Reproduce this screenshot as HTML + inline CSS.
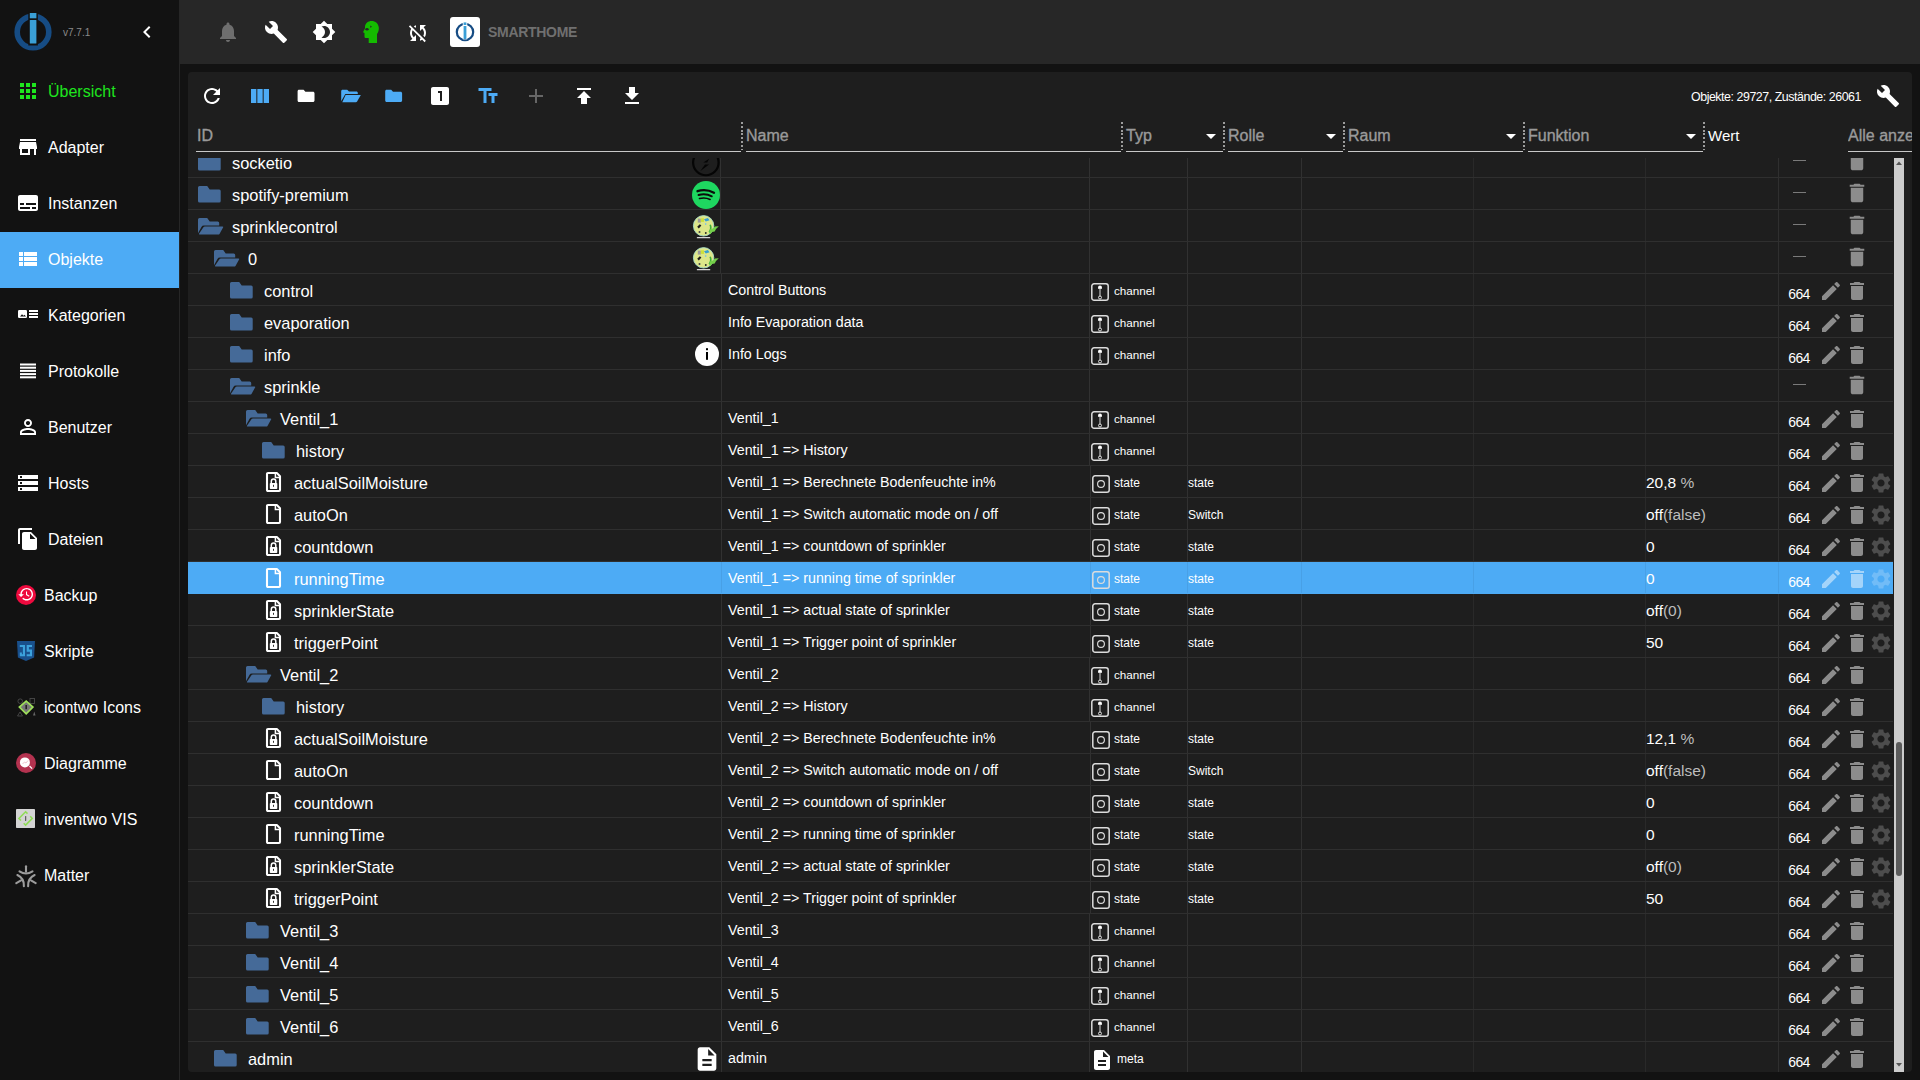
<!DOCTYPE html><html><head><meta charset="utf-8"><title>ioBroker Objekte</title><style>
html,body{margin:0;padding:0;}body{width:1920px;height:1080px;overflow:hidden;background:#121212;position:relative;font-family:"Liberation Sans", sans-serif;}
.t{position:absolute;white-space:nowrap;}.r{position:absolute;}.i{position:absolute;display:block;overflow:visible;}
#body{position:absolute;left:188px;top:158px;width:1706px;height:914px;overflow:hidden;}
</style></head><body>
<div class="r" style="left:0px;top:0px;width:179px;height:1080px;background:#121212;"></div>
<div class="r" style="left:179px;top:0px;width:1px;height:1080px;background:#262626;"></div>
<svg class="i" style="left:12px;top:11px;" width="42" height="42" viewBox="0 0 42 42"><circle cx="21" cy="21" r="15.8" fill="none" stroke="#164c84" stroke-width="5.6"/><rect x="16.3" y="0.5" width="9.6" height="34" fill="#121212"/><rect x="17.8" y="2" width="6.6" height="5.3" fill="#3a9fd6"/><rect x="17.8" y="8.9" width="6.6" height="23.7" rx="0.5" fill="#3a9fd6"/></svg>
<div class="t" style="left:63px;top:27.54px;font-size:10px;line-height:10px;color:#8a8a8a;font-weight:400;">v7.7.1</div>
<svg class="i" style="left:135px;top:20px;" width="24" height="24" viewBox="0 0 24 24"><path fill="#ffffff" d="M15.41 7.41L14 6l-6 6 6 6 1.41-1.41L10.83 12z"/></svg>
<div class="r" style="left:0px;top:232px;width:179px;height:56px;background:#4dabf5;"></div>
<div class="t" style="left:48px;top:84.46px;font-size:16px;line-height:16px;color:#1ee51e;font-weight:400;">Übersicht</div>
<svg class="i" style="left:16px;top:79px;" width="24" height="24" viewBox="0 0 24 24"><path fill="#1ee51e" d="M4 8h4V4H4v4zm6 12h4v-4h-4v4zm-6 0h4v-4H4v4zm0-6h4v-4H4v4zm6 0h4v-4h-4v4zm6-10v4h4V4h-4zm-6 4h4V4h-4v4zm6 6h4v-4h-4v4zm0 6h4v-4h-4v4z"/></svg>
<div class="t" style="left:48px;top:140.46px;font-size:16px;line-height:16px;color:#ffffff;font-weight:400;">Adapter</div>
<svg class="i" style="left:16px;top:135px;" width="24" height="24" viewBox="0 0 24 24"><path fill="#ffffff" d="M20 4H4v2h16V4zm1 10v-2l-1-5H4l-1 5v2h1v6h10v-6h4v6h2v-6h1zm-9 4H6v-4h6v4z"/></svg>
<div class="t" style="left:48px;top:196.46px;font-size:16px;line-height:16px;color:#ffffff;font-weight:400;">Instanzen</div>
<svg class="i" style="left:16px;top:191px;" width="24" height="24" viewBox="0 0 24 24"><path fill="#ffffff" d="M20 4H4c-1.1 0-2 .9-2 2v12c0 1.1.9 2 2 2h16c1.1 0 2-.9 2-2V6c0-1.1-.9-2-2-2zM4 12h4v2H4v-2zm10 6H4v-2h10v2zm6 0h-4v-2h4v2zm0-4H10v-2h10v2z"/></svg>
<div class="t" style="left:48px;top:252.46px;font-size:16px;line-height:16px;color:#ffffff;font-weight:400;">Objekte</div>
<svg class="i" style="left:16px;top:247px;" width="24" height="24" viewBox="0 0 24 24"><path fill="#ffffff" d="M3 14h4v-4H3v4zm0 5h4v-4H3v4zM3 9h4V5H3v4zm5 5h13v-4H8v4zm0 5h13v-4H8v4zM8 5v4h13V5H8z"/></svg>
<div class="t" style="left:48px;top:308.46px;font-size:16px;line-height:16px;color:#ffffff;font-weight:400;">Kategorien</div>
<div class="t" style="left:48px;top:364.46px;font-size:16px;line-height:16px;color:#ffffff;font-weight:400;">Protokolle</div>
<div class="t" style="left:48px;top:420.46px;font-size:16px;line-height:16px;color:#ffffff;font-weight:400;">Benutzer</div>
<svg class="i" style="left:16px;top:415px;" width="24" height="24" viewBox="0 0 24 24"><path fill="#ffffff" d="M12 5.9c1.16 0 2.1.94 2.1 2.1s-.94 2.1-2.1 2.1S9.9 9.16 9.9 8s.94-2.1 2.1-2.1m0 9c2.970 0 6.1 1.46 6.1 2.1v1.1H5.9V17c0-.64 3.13-2.1 6.1-2.1M12 4C9.79 4 8 5.79 8 8s1.79 4 4 4 4-1.79 4-4-1.79-4-4-4zm0 9c-2.67 0-8 1.34-8 4v3h16v-3c0-2.66-5.33-4-8-4z"/></svg>
<div class="t" style="left:48px;top:476.46px;font-size:16px;line-height:16px;color:#ffffff;font-weight:400;">Hosts</div>
<svg class="i" style="left:16px;top:471px;" width="24" height="24" viewBox="0 0 24 24"><path fill="#ffffff" d="M2 20h20v-4H2v4zm2-3h2v2H4v-2zM2 4v4h20V4H2zm4 3H4V5h2v2zm-4 7h20v-4H2v4zm2-3h2v2H4v-2z"/></svg>
<div class="t" style="left:48px;top:532.46px;font-size:16px;line-height:16px;color:#ffffff;font-weight:400;">Dateien</div>
<svg class="i" style="left:16px;top:527px;" width="24" height="24" viewBox="0 0 24 24"><path fill="#ffffff" d="M16 1H4c-1.1 0-2 .9-2 2v14h2V3h12V1zm-1 4l6 6v10c0 1.1-.9 2-2 2H7.99C6.89 23 6 22.1 6 21l.01-14c0-1.1.89-2 1.99-2h7zm-1 7h5.5L14 6.5V12z"/></svg>
<div class="t" style="left:44px;top:588.46px;font-size:16px;line-height:16px;color:#ffffff;font-weight:400;">Backup</div>
<div class="t" style="left:44px;top:644.46px;font-size:16px;line-height:16px;color:#ffffff;font-weight:400;">Skripte</div>
<div class="t" style="left:44px;top:700.46px;font-size:16px;line-height:16px;color:#ffffff;font-weight:400;">icontwo Icons</div>
<div class="t" style="left:44px;top:756.46px;font-size:16px;line-height:16px;color:#ffffff;font-weight:400;">Diagramme</div>
<div class="t" style="left:44px;top:812.46px;font-size:16px;line-height:16px;color:#ffffff;font-weight:400;">inventwo VIS</div>
<div class="t" style="left:44px;top:868.46px;font-size:16px;line-height:16px;color:#ffffff;font-weight:400;">Matter</div>
<svg class="i" style="left:16px;top:303px;" width="24" height="24" viewBox="0 0 24 24"><rect x="2" y="7" width="9" height="8" rx="1.2" fill="#fff"/><path d="M4 13.5l2-2.2 1.5 1.5 1-1 1.5 1.7z" fill="#121212"/><rect x="13" y="7" width="9" height="2" fill="#fff"/><rect x="13" y="10" width="9" height="2" fill="#fff"/><rect x="13" y="13" width="9" height="2" fill="#fff"/></svg>
<svg class="i" style="left:16px;top:359px;" width="24" height="24" viewBox="0 0 24 24"><rect x="4" y="4.5" width="16" height="2" fill="#fff"/><rect x="4" y="7.7" width="16" height="2" fill="#fff"/><rect x="4" y="10.9" width="16" height="2" fill="#fff"/><rect x="4" y="14.1" width="16" height="2" fill="#fff"/><rect x="4" y="17.3" width="16" height="2" fill="#fff"/></svg>
<svg class="i" style="left:16px;top:585px;" width="20" height="20" viewBox="0 0 20 20"><circle cx="10" cy="10" r="10" fill="#ee0a3e"/><g transform="translate(1.6,0.8) scale(0.7)"><path fill="#fff" d="M13 3c-4.97 0-9 4.030-9 9H1l3.89 3.89.07.14L9 12H6c0-3.87 3.13-7 7-7s7 3.13 7 7-3.13 7-7 7c-1.93 0-3.68-.79-4.94-2.060l-1.42 1.42C8.27 19.99 10.51 21 13 21c4.97 0 9-4.03 9-9s-4.03-9-9-9zm-1 5v5l4.28 2.54.72-1.21-3.5-2.08V8H12z"/></g></svg>
<svg class="i" style="left:16px;top:640px;" width="20" height="22" viewBox="0 0 20 22"><path d="M1 1H19L18.1 17.6L10 21L1.9 17.6Z" fill="#19508c"/><path d="M3.8 4.9H9V16.3H3.8V12.5H5.9V14.2H6.9V7H3.8Z" fill="#3ca2dc"/><path d="M10.7 4.9H16V7H12.9V9.6H16V16.3H10.7V14.2H13.9V11.7H10.7Z" fill="#3ca2dc"/></svg>
<svg class="i" style="left:16px;top:697px;" width="20" height="20" viewBox="0 0 20 20"><g fill="none" stroke="#4a4a4a" stroke-width="0.9"><circle cx="4.2" cy="4.2" r="2.3"/><rect x="14" y="1.5" width="4.5" height="5"/><path d="M1.5 19h5l-2.5-4z"/></g><path d="M17 18.5h2.5l-1.2-4z" fill="#666"/><path d="M10.2 4.2L16.9 10 10.2 16.8 3.4 10z" fill="#777" stroke="#9ee05a" stroke-width="1.7"/><rect x="9.4" y="8" width="1.6" height="4.2" fill="#222"/></svg>
<svg class="i" style="left:16px;top:753px;" width="20" height="20" viewBox="0 0 20 20"><circle cx="10" cy="10" r="10" fill="#b3324f"/><circle cx="8.9" cy="9.4" r="5" fill="#fff"/><path d="M13.5 13l2.6 2.6" stroke="#fff" stroke-width="1.3"/><path d="M6.5 11l2-2 1.5 1 2-2.5" stroke="#e9b7c3" stroke-width="0.8" fill="none"/></svg>
<svg class="i" style="left:16px;top:809px;" width="19" height="19" viewBox="0 0 19 19"><rect x="0" y="0" width="19" height="19" rx="0.8" fill="#d4d4d4"/><path d="M11.5 4.6L9.6 2.7 2.9 9.4 5 11.5M7.7 14.2L9.6 16.1 16.3 9.4 14.2 7.3" fill="none" stroke="#8fdc55" stroke-width="1.5"/><rect x="9.2" y="7" width="1" height="5" rx="0.5" fill="#444"/></svg>
<svg class="i" style="left:16px;top:865px;" width="20" height="22" viewBox="0 0 20 22"><g transform="rotate(0 10 12.5)" stroke="#9c9c9c" stroke-width="2.1" fill="none" stroke-linecap="round"><path d="M10 1.3V6.8"/><path d="M3.5 6.3Q10 10.7 16.5 6.3"/></g><g transform="rotate(120 10 12.5)" stroke="#9c9c9c" stroke-width="2.1" fill="none" stroke-linecap="round"><path d="M10 1.3V6.8"/><path d="M3.5 6.3Q10 10.7 16.5 6.3"/></g><g transform="rotate(240 10 12.5)" stroke="#9c9c9c" stroke-width="2.1" fill="none" stroke-linecap="round"><path d="M10 1.3V6.8"/><path d="M3.5 6.3Q10 10.7 16.5 6.3"/></g></svg>
<div class="r" style="left:180px;top:0px;width:1740px;height:64px;background:#272727;"></div>
<svg class="i" style="left:216px;top:20px;" width="24" height="24" viewBox="0 0 24 24"><path fill="#6e6e6e" d="M12 22c1.1 0 2-.9 2-2h-4c0 1.1.89 2 2 2zm6-6v-5c0-3.07-1.64-5.64-4.5-6.32V4c0-.83-.67-1.5-1.5-1.5s-1.5.67-1.5 1.5v.68C7.63 5.36 6 7.92 6 11v5l-2 2v1h16v-1l-2-2z"/></svg>
<svg class="i" style="left:264px;top:20px;" width="24" height="24" viewBox="0 0 24 24"><path fill="#ffffff" d="M22.7 19l-9.1-9.1c.9-2.3.4-5-1.5-6.9-2-2-5-2.4-7.4-1.3L9 6 6 9 1.6 4.7C.4 7.1.9 10.1 2.9 12.1c1.9 1.9 4.6 2.4 6.9 1.5l9.1 9.1c.4.4 1 .4 1.4 0l2.3-2.3c.5-.4.5-1.1.1-1.4z"/></svg>
<svg class="i" style="left:312px;top:20px;" width="24" height="24" viewBox="0 0 24 24"><path fill="#ffffff" d="M20 8.69V4h-4.69L12 .69 8.69 4H4v4.69L.69 12 4 15.31V20h4.69L12 23.31 15.31 20H20v-4.69L23.31 12 20 8.69zM12 18c-.89 0-1.74-.2-2.5-.55C11.56 16.5 13 14.42 13 12s-1.44-4.5-3.5-5.45C10.26 6.2 11.11 6 12 6c3.31 0 6 2.69 6 6s-2.69 6-6 6z"/></svg>
<svg class="i" style="left:356px;top:16px;" width="30" height="32" viewBox="0 0 30 32"><path d="M12.7 27H21V18C22.5 16 23 13.5 22.8 11.5C22.5 7.5 19.5 4.9 15.5 4.9C12 4.9 9.5 7 9 10.5V12.3L7 16.2L8.5 16.9V20.5C8.5 21.5 9.2 22 10 22H12.7Z" fill="#14bb00"/><ellipse cx="11" cy="13.3" rx="1.7" ry="1.3" fill="#272727"/><path d="M14.2 9.5L15.9 10.6L14.5 12Z" fill="#272727"/></svg>
<svg class="i" style="left:406px;top:21px;" width="24" height="24" viewBox="0 0 24 24"><path fill="#ffffff" d="M10 6.35V4.26c-.8.21-1.55.54-2.23.96l1.46 1.46c.25-.12.5-.24.77-.33zm-7.14-.94l2.36 2.36C4.45 8.99 4 10.44 4 12c0 2.21.91 4.2 2.36 5.64L4 20h6v-6l-2.24 2.24C6.68 15.15 6 13.66 6 12c0-1 .25-1.94.68-2.77l8.08 8.08c-.25.13-.5.25-.77.34v2.09c.8-.21 1.550-.54 2.23-.96l2.36 2.36 1.27-1.27L4.14 4.14 2.86 5.41zM20 4h-6v6l2.24-2.24C17.32 8.85 18 10.34 18 12c0 1-.25 1.94-.68 2.77l1.46 1.46C19.550 15.010 20 13.56 20 12c0-2.21-.91-4.2-2.36-5.64L20 4z"/></svg>
<div class="r" style="left:450px;top:17px;width:30px;height:30px;background:#ffffff;border-radius:3px;"></div>
<svg class="i" style="left:455px;top:21px;" width="20" height="21" viewBox="0 0 20 21"><circle cx="10" cy="11" r="8.2" fill="none" stroke="#164c84" stroke-width="2.2"/><rect x="7.8" y="0.6" width="4.4" height="17.8" fill="#fff"/><rect x="8.6" y="1.4" width="2.8" height="2.6" fill="#3a9fd6"/><rect x="8.6" y="5" width="2.8" height="13" fill="#3a9fd6"/></svg>
<div class="t" style="left:488px;top:24.55px;font-size:14px;line-height:14px;color:#707070;font-weight:700;letter-spacing:-0.3px;">SMARTHOME</div>
<div class="r" style="left:188px;top:72px;width:1724px;height:1000px;background:#1e1e1e;border-radius:4px;"></div>
<svg class="i" style="left:200px;top:84px;" width="24" height="24" viewBox="0 0 24 24"><path fill="#ffffff" d="M17.65 6.35C16.2 4.9 14.21 4 12 4c-4.42 0-7.99 3.58-7.99 8s3.57 8 7.99 8c3.73 0 6.84-2.55 7.73-6h-2.08c-.82 2.33-3.04 4-5.65 4-3.31 0-6-2.69-6-6s2.69-6 6-6c1.66 0 3.14.69 4.220 1.78L13 11h7V4l-2.35 2.35z"/></svg>
<svg class="i" style="left:248px;top:84px;" width="24" height="24" viewBox="0 0 24 24"><path fill="#4dabf5" d="M14.67 5v14H9.33V5h5.34zm1 14H21V5h-5.33v14zm-7.34 0V5H3v14h5.33z"/></svg>
<svg class="i" style="left:296px;top:86px;" width="20" height="20" viewBox="0 0 20 20"><path d="M1.6 5.3c0-.9.6-1.5 1.4-1.5h4.6l1.8 1.9h7.6c.8 0 1.5.6 1.5 1.5v7.4c0 .9-.7 1.5-1.5 1.5H3c-.8 0-1.4-.6-1.4-1.5z" fill="#ffffff"/></svg>
<svg class="i" style="left:340px;top:86px;" width="22" height="20" viewBox="0 0 22 20"><path d="M1.2 5.2c0-.8.6-1.4 1.4-1.4h4.6l1.8 1.8h7.400c.8 0 1.400.600 1.400 1.400V8H5.300L1.200 15.200z" fill="#4dabf5"/><path d="M5.6 9h15.200l-3.700 6.500c-.300.500-.700.700-1.200.700H2.300z" fill="#4dabf5"/></svg>
<svg class="i" style="left:384px;top:86px;" width="20" height="20" viewBox="0 0 20 20"><path d="M1.2 5.3c0-.9.6-1.5 1.4-1.5h4.6l1.8 1.9h7.6c.8 0 1.5.6 1.5 1.5v7.4c0 .9-.7 1.5-1.5 1.5H2.6c-.8 0-1.4-.6-1.4-1.5z" fill="#4dabf5"/></svg>
<svg class="i" style="left:428px;top:84px;" width="24" height="24" viewBox="0 0 24 24"><path fill="#ffffff" d="M19 3H5c-1.1 0-2 .9-2 2v14c0 1.1.9 2 2 2h14c1.1 0 2-.9 2-2V5c0-1.1-.9-2-2-2zm-5 14h-2V9h-2V7h4v10z"/></svg>
<svg class="i" style="left:476px;top:84px;" width="24" height="24" viewBox="0 0 24 24"><path fill="#4dabf5" d="M2.5 4v3h5v12h3V7h5V4h-13zm19 5h-9v3h3v7h3v-7h3V9z"/></svg>
<svg class="i" style="left:524px;top:84px;" width="24" height="24" viewBox="0 0 24 24"><path fill="#666666" d="M19 13h-6v6h-2v-6H5v-2h6V5h2v6h6v2z"/></svg>
<svg class="i" style="left:572px;top:84px;" width="24" height="24" viewBox="0 0 24 24"><path fill="#ffffff" d="M5 4v2h14V4H5zm0 10h4v6h6v-6h4l-7-7-7 7z"/></svg>
<svg class="i" style="left:620px;top:84px;" width="24" height="24" viewBox="0 0 24 24"><path fill="#ffffff" d="M19 9h-4V3H9v6H5l7 7 7-7zM5 18v2h14v-2H5z"/></svg>
<div class="t" style="left:1691px;top:90.50px;font-size:12.4px;line-height:12.4px;color:#ffffff;font-weight:400;letter-spacing:-0.45px;">Objekte: 29727, Zustände: 26061</div>
<svg class="i" style="left:1876px;top:84px;" width="24" height="24" viewBox="0 0 24 24"><path fill="#ffffff" d="M22.7 19l-9.1-9.1c.9-2.3.4-5-1.5-6.9-2-2-5-2.4-7.4-1.3L9 6 6 9 1.6 4.7C.4 7.1.9 10.1 2.9 12.1c1.9 1.9 4.6 2.4 6.9 1.5l9.1 9.1c.4.4 1 .4 1.4 0l2.3-2.3c.5-.4.5-1.1.1-1.4z"/></svg>
<div class="r" style="left:196px;top:151px;width:545px;height:1px;background:#c8c8c8;"></div>
<div class="t" style="left:197px;top:128.46px;font-size:16px;line-height:16px;color:#9a9a9a;font-weight:400;-webkit-text-stroke:0.35px #9a9a9a;">ID</div>
<div class="r" style="left:741px;top:122px;width:2px;height:28px;background:repeating-linear-gradient(to bottom,#9c9c9c 0 2px,transparent 2px 3.8px);"></div>
<div class="r" style="left:746px;top:151px;width:375px;height:1px;background:#c8c8c8;"></div>
<div class="t" style="left:746px;top:128.46px;font-size:16px;line-height:16px;color:#9a9a9a;font-weight:400;-webkit-text-stroke:0.35px #9a9a9a;">Name</div>
<div class="r" style="left:1121px;top:122px;width:2px;height:28px;background:repeating-linear-gradient(to bottom,#9c9c9c 0 2px,transparent 2px 3.8px);"></div>
<div class="r" style="left:1126px;top:151px;width:97px;height:1px;background:#c8c8c8;"></div>
<div class="t" style="left:1126px;top:128.46px;font-size:16px;line-height:16px;color:#9a9a9a;font-weight:400;-webkit-text-stroke:0.35px #9a9a9a;">Typ</div>
<svg class="i" style="left:1199px;top:124px;" width="24" height="24" viewBox="0 0 24 24"><path fill="#ffffff" d="M7 10l5 5 5-5z"/></svg>
<div class="r" style="left:1223px;top:122px;width:2px;height:28px;background:repeating-linear-gradient(to bottom,#9c9c9c 0 2px,transparent 2px 3.8px);"></div>
<div class="r" style="left:1228px;top:151px;width:115px;height:1px;background:#c8c8c8;"></div>
<div class="t" style="left:1228px;top:128.46px;font-size:16px;line-height:16px;color:#9a9a9a;font-weight:400;-webkit-text-stroke:0.35px #9a9a9a;">Rolle</div>
<svg class="i" style="left:1319px;top:124px;" width="24" height="24" viewBox="0 0 24 24"><path fill="#ffffff" d="M7 10l5 5 5-5z"/></svg>
<div class="r" style="left:1343px;top:122px;width:2px;height:28px;background:repeating-linear-gradient(to bottom,#9c9c9c 0 2px,transparent 2px 3.8px);"></div>
<div class="r" style="left:1348px;top:151px;width:175px;height:1px;background:#c8c8c8;"></div>
<div class="t" style="left:1348px;top:128.46px;font-size:16px;line-height:16px;color:#9a9a9a;font-weight:400;-webkit-text-stroke:0.35px #9a9a9a;">Raum</div>
<svg class="i" style="left:1499px;top:124px;" width="24" height="24" viewBox="0 0 24 24"><path fill="#ffffff" d="M7 10l5 5 5-5z"/></svg>
<div class="r" style="left:1523px;top:122px;width:2px;height:28px;background:repeating-linear-gradient(to bottom,#9c9c9c 0 2px,transparent 2px 3.8px);"></div>
<div class="r" style="left:1528px;top:151px;width:175px;height:1px;background:#c8c8c8;"></div>
<div class="t" style="left:1528px;top:128.46px;font-size:16px;line-height:16px;color:#9a9a9a;font-weight:400;-webkit-text-stroke:0.35px #9a9a9a;">Funktion</div>
<svg class="i" style="left:1679px;top:124px;" width="24" height="24" viewBox="0 0 24 24"><path fill="#ffffff" d="M7 10l5 5 5-5z"/></svg>
<div class="r" style="left:1703px;top:122px;width:2px;height:28px;background:repeating-linear-gradient(to bottom,#9c9c9c 0 2px,transparent 2px 3.8px);"></div>
<div class="t" style="left:1708px;top:128.30px;font-size:15px;line-height:15px;color:#ffffff;font-weight:400;">Wert</div>
<div class="r" style="left:1848px;top:151px;width:64px;height:1px;background:#c8c8c8;"></div>
<div class="r" style="left:1848px;top:120px;width:64px;height:30px;overflow:hidden;">
<div class="t" style="left:0px;top:8.46px;font-size:16px;line-height:16px;color:#9a9a9a;font-weight:400;-webkit-text-stroke:0.35px #9a9a9a;">Alle anzeigen</div>
</div>
<div id="body">
<div class="r" style="left:0px;top:19px;width:1705px;height:1px;background:#2f2f2f;"></div>
<div class="r" style="left:532px;top:-12px;width:1px;height:31px;background:#313131;"></div>
<div class="r" style="left:901px;top:-12px;width:1px;height:31px;background:#313131;"></div>
<div class="r" style="left:999px;top:-12px;width:1px;height:31px;background:#313131;"></div>
<div class="r" style="left:1113px;top:-12px;width:1px;height:31px;background:#313131;"></div>
<div class="r" style="left:1285px;top:-12px;width:1px;height:31px;background:#292929;"></div>
<div class="r" style="left:1457px;top:-12px;width:1px;height:31px;background:#292929;"></div>
<div class="r" style="left:1590px;top:-12px;width:1px;height:31px;background:#2f2f2f;"></div>
<svg class="i" style="left:10.30px;top:-4.40px;" width="23" height="17" viewBox="0 0 23 17"><path d="M1.5 0H9.2L11.7 3.4H21.2Q22.7 3.4 22.7 4.9V15.1Q22.7 16.6 21.2 16.6H1.5Q0 16.6 0 15.1V1.5Q0 0 1.5 0Z" fill="#456a98"/></svg>
<div class="t" style="left:44.00px;top:-2.88px;font-size:16.4px;line-height:16.4px;color:#ffffff;font-weight:400;">socketio</div>
<svg class="i" style="left:504.00px;top:-10.00px;" width="28" height="28" viewBox="0 0 28 28"><circle cx="13.85" cy="14.5" r="12.75" fill="none" stroke="#050505" stroke-width="2.2"/><path d="M17.1 10.7L11.3 14.4H15.2Z" fill="#050505"/><path d="M13 16.6H17.1L8.4 23.1Z" fill="#050505"/></svg>
<div class="r" style="left:1605px;top:2px;width:13px;height:1px;background:#7a7a7a;"></div>
<svg class="i" style="left:1657.00px;top:-8.90px;transform-origin:12px 12px;transform:scale(1.04);" width="24" height="24" viewBox="0 0 24 24"><path fill="#8c8c8c" d="M6 19c0 1.1.9 2 2 2h8c1.1 0 2-.9 2-2V7H6v12zM19 4h-3.5l-1-1h-5l-1 1H5v2h14V4z"/></svg>
<div class="r" style="left:0px;top:51px;width:1705px;height:1px;background:#2f2f2f;"></div>
<div class="r" style="left:532px;top:20px;width:1px;height:31px;background:#313131;"></div>
<div class="r" style="left:901px;top:20px;width:1px;height:31px;background:#313131;"></div>
<div class="r" style="left:999px;top:20px;width:1px;height:31px;background:#313131;"></div>
<div class="r" style="left:1113px;top:20px;width:1px;height:31px;background:#313131;"></div>
<div class="r" style="left:1285px;top:20px;width:1px;height:31px;background:#292929;"></div>
<div class="r" style="left:1457px;top:20px;width:1px;height:31px;background:#292929;"></div>
<div class="r" style="left:1590px;top:20px;width:1px;height:31px;background:#2f2f2f;"></div>
<svg class="i" style="left:10.30px;top:27.60px;" width="23" height="17" viewBox="0 0 23 17"><path d="M1.5 0H9.2L11.7 3.4H21.2Q22.7 3.4 22.7 4.9V15.1Q22.7 16.6 21.2 16.6H1.5Q0 16.6 0 15.1V1.5Q0 0 1.5 0Z" fill="#456a98"/></svg>
<div class="t" style="left:44.00px;top:29.12px;font-size:16.4px;line-height:16.4px;color:#ffffff;font-weight:400;">spotify-premium</div>
<svg class="i" style="left:504.00px;top:23.00px;" width="28" height="28" viewBox="0 0 28 28"><circle cx="14" cy="14" r="14" fill="#1ed760"/><path d="M5.5 10.200c5.200-1.600 11.500-1.100 16.500 1.600" stroke="#0b0b0b" stroke-width="2.300" fill="none" stroke-linecap="round"/><path d="M6.500 14c4.300-1.200 9.400-.800 13.300 1.300" stroke="#0b0b0b" stroke-width="1.900" fill="none" stroke-linecap="round"/><path d="M7.500 17.500c3.500-.900 7.500-.600 10.600 1" stroke="#0b0b0b" stroke-width="1.600" fill="none" stroke-linecap="round"/></svg>
<div class="r" style="left:1605px;top:34px;width:13px;height:1px;background:#7a7a7a;"></div>
<svg class="i" style="left:1657.00px;top:23.10px;transform-origin:12px 12px;transform:scale(1.04);" width="24" height="24" viewBox="0 0 24 24"><path fill="#8c8c8c" d="M6 19c0 1.1.9 2 2 2h8c1.1 0 2-.9 2-2V7H6v12zM19 4h-3.5l-1-1h-5l-1 1H5v2h14V4z"/></svg>
<div class="r" style="left:0px;top:83px;width:1705px;height:1px;background:#2f2f2f;"></div>
<div class="r" style="left:532px;top:52px;width:1px;height:31px;background:#313131;"></div>
<div class="r" style="left:901px;top:52px;width:1px;height:31px;background:#313131;"></div>
<div class="r" style="left:999px;top:52px;width:1px;height:31px;background:#313131;"></div>
<div class="r" style="left:1113px;top:52px;width:1px;height:31px;background:#313131;"></div>
<div class="r" style="left:1285px;top:52px;width:1px;height:31px;background:#292929;"></div>
<div class="r" style="left:1457px;top:52px;width:1px;height:31px;background:#292929;"></div>
<div class="r" style="left:1590px;top:52px;width:1px;height:31px;background:#2f2f2f;"></div>
<svg class="i" style="left:10.30px;top:59.60px;" width="26" height="17" viewBox="0 0 26 17"><path d="M1.5 0H9.2L11.7 3.4H19.7Q21.2 3.4 21.2 4.9V7.5H5.8Q4.3 7.5 3.6 8.7L0 15.3V1.5Q0 0 1.5 0Z" fill="#456a98"/><path d="M5.4 9.2Q5.9 8.4 6.9 8.4H24.4Q25.6 8.4 25.2 9.3L21.5 15.9Q21.1 16.6 20.3 16.6H1.5Q0.6 16.6 1 15.8Z" fill="#456a98"/></svg>
<div class="t" style="left:44.00px;top:61.12px;font-size:16.4px;line-height:16.4px;color:#ffffff;font-weight:400;">sprinklecontrol</div>
<svg class="i" style="left:505.00px;top:56.00px;" width="28" height="26" viewBox="0 0 28 26"><circle cx="10.6" cy="11.8" r="10.2" fill="#dde78a" stroke="#a6dccb" stroke-width="0.9"/><rect x="4.8" y="4.6" width="3" height="4" fill="#9a9a9a"/><rect x="7.8" y="4.3" width="3.2" height="3.6" fill="#cfe03a"/><path d="M11 5.2l3.8-1.2 1.8 2.2-3.8 1.3z" fill="#3aa0d0"/><path d="M4.2 12.8l2.6-2.6 1.6 1.4-2.6 3z" fill="#1e1e1e"/><circle cx="6.5" cy="18" r="1" fill="#444"/><circle cx="12.8" cy="19" r="0.9" fill="#222"/><rect x="12" y="9" width="1.3" height="2" fill="#8cc8d8"/><path d="M17.2 10.8c1 2.5.8 5-1 7.5" stroke="#3db03a" stroke-width="1.6" fill="none"/><path d="M17 15.6l3.3-1.4 1.5-1.8 4-0.2-2.8 2.8-1.3 2.6-2.8.4-1.4 2.2-1.3-1.5z" fill="#74d04a"/><rect x="3.8" y="23" width="13.5" height="1.3" rx="0.6" fill="#d6d6d6"/></svg>
<div class="r" style="left:1605px;top:66px;width:13px;height:1px;background:#7a7a7a;"></div>
<svg class="i" style="left:1657.00px;top:55.10px;transform-origin:12px 12px;transform:scale(1.04);" width="24" height="24" viewBox="0 0 24 24"><path fill="#8c8c8c" d="M6 19c0 1.1.9 2 2 2h8c1.1 0 2-.9 2-2V7H6v12zM19 4h-3.5l-1-1h-5l-1 1H5v2h14V4z"/></svg>
<div class="r" style="left:0px;top:115px;width:1705px;height:1px;background:#2f2f2f;"></div>
<div class="r" style="left:532px;top:84px;width:1px;height:31px;background:#313131;"></div>
<div class="r" style="left:901px;top:84px;width:1px;height:31px;background:#313131;"></div>
<div class="r" style="left:999px;top:84px;width:1px;height:31px;background:#313131;"></div>
<div class="r" style="left:1113px;top:84px;width:1px;height:31px;background:#313131;"></div>
<div class="r" style="left:1285px;top:84px;width:1px;height:31px;background:#292929;"></div>
<div class="r" style="left:1457px;top:84px;width:1px;height:31px;background:#292929;"></div>
<div class="r" style="left:1590px;top:84px;width:1px;height:31px;background:#2f2f2f;"></div>
<svg class="i" style="left:26.30px;top:91.60px;" width="26" height="17" viewBox="0 0 26 17"><path d="M1.5 0H9.2L11.7 3.4H19.7Q21.2 3.4 21.2 4.9V7.5H5.8Q4.3 7.5 3.6 8.7L0 15.3V1.5Q0 0 1.5 0Z" fill="#456a98"/><path d="M5.4 9.2Q5.9 8.4 6.9 8.4H24.4Q25.6 8.4 25.2 9.3L21.5 15.9Q21.1 16.6 20.3 16.6H1.5Q0.6 16.6 1 15.8Z" fill="#456a98"/></svg>
<div class="t" style="left:60.00px;top:93.12px;font-size:16.4px;line-height:16.4px;color:#ffffff;font-weight:400;">0</div>
<svg class="i" style="left:505.00px;top:88.00px;" width="28" height="26" viewBox="0 0 28 26"><circle cx="10.6" cy="11.8" r="10.2" fill="#dde78a" stroke="#a6dccb" stroke-width="0.9"/><rect x="4.8" y="4.6" width="3" height="4" fill="#9a9a9a"/><rect x="7.8" y="4.3" width="3.2" height="3.6" fill="#cfe03a"/><path d="M11 5.2l3.8-1.2 1.8 2.2-3.8 1.3z" fill="#3aa0d0"/><path d="M4.2 12.8l2.6-2.6 1.6 1.4-2.6 3z" fill="#1e1e1e"/><circle cx="6.5" cy="18" r="1" fill="#444"/><circle cx="12.8" cy="19" r="0.9" fill="#222"/><rect x="12" y="9" width="1.3" height="2" fill="#8cc8d8"/><path d="M17.2 10.8c1 2.5.8 5-1 7.5" stroke="#3db03a" stroke-width="1.6" fill="none"/><path d="M17 15.6l3.3-1.4 1.5-1.8 4-0.2-2.8 2.8-1.3 2.6-2.8.4-1.4 2.2-1.3-1.5z" fill="#74d04a"/><rect x="3.8" y="23" width="13.5" height="1.3" rx="0.6" fill="#d6d6d6"/></svg>
<div class="r" style="left:1605px;top:98px;width:13px;height:1px;background:#7a7a7a;"></div>
<svg class="i" style="left:1657.00px;top:87.10px;transform-origin:12px 12px;transform:scale(1.04);" width="24" height="24" viewBox="0 0 24 24"><path fill="#8c8c8c" d="M6 19c0 1.1.9 2 2 2h8c1.1 0 2-.9 2-2V7H6v12zM19 4h-3.5l-1-1h-5l-1 1H5v2h14V4z"/></svg>
<div class="r" style="left:0px;top:147px;width:1705px;height:1px;background:#2f2f2f;"></div>
<div class="r" style="left:533px;top:116px;width:1px;height:31px;background:#313131;"></div>
<div class="r" style="left:901px;top:116px;width:1px;height:31px;background:#313131;"></div>
<div class="r" style="left:999px;top:116px;width:1px;height:31px;background:#313131;"></div>
<div class="r" style="left:1113px;top:116px;width:1px;height:31px;background:#313131;"></div>
<div class="r" style="left:1285px;top:116px;width:1px;height:31px;background:#292929;"></div>
<div class="r" style="left:1457px;top:116px;width:1px;height:31px;background:#292929;"></div>
<div class="r" style="left:1590px;top:116px;width:1px;height:31px;background:#2f2f2f;"></div>
<svg class="i" style="left:42.30px;top:123.60px;" width="23" height="17" viewBox="0 0 23 17"><path d="M1.5 0H9.2L11.7 3.4H21.2Q22.7 3.4 22.7 4.9V15.1Q22.7 16.6 21.2 16.6H1.5Q0 16.6 0 15.1V1.5Q0 0 1.5 0Z" fill="#456a98"/></svg>
<div class="t" style="left:76.00px;top:125.12px;font-size:16.4px;line-height:16.4px;color:#ffffff;font-weight:400;">control</div>
<div class="t" style="left:540.00px;top:124.94px;font-size:14.25px;line-height:14.25px;color:#ffffff;font-weight:400;">Control Buttons</div>
<svg class="i" style="left:903.00px;top:125.00px;" width="18" height="18" viewBox="0 0 18 18"><rect x="0.8" y="0.8" width="16.4" height="16.4" rx="2.300" fill="none" stroke="#dcdcdc" stroke-width="1.500"/><rect x="8.400" y="3" width="1.200" height="10.500" fill="#bdbdbd"/><path d="M7 4.500a2 2 0 0 1 4 0V5.800H7z" fill="#fff"/><circle cx="9" cy="14.500" r="1.500" fill="none" stroke="#dcdcdc" stroke-width="1"/></svg>
<div class="t" style="left:926.00px;top:127.10px;font-size:11.7px;line-height:11.7px;color:#ffffff;font-weight:400;">channel</div>
<div class="t" style="left:1600.30px;top:129.15px;font-size:14px;line-height:14px;color:#ffffff;font-weight:400;letter-spacing:-0.65px;">664</div>
<svg class="i" style="left:1631.00px;top:121.00px;" width="24" height="24" viewBox="0 0 24 24"><path fill="#8c8c8c" d="M3 17.25V21h3.75L17.81 9.94l-3.75-3.75L3 17.25zM20.71 7.04c.39-.39.39-1.02 0-1.41l-2.34-2.34c-.39-.39-1.02-.39-1.41 0l-1.83 1.83 3.75 3.75 1.83-1.83z"/></svg>
<svg class="i" style="left:1657.00px;top:121.00px;" width="24" height="24" viewBox="0 0 24 24"><path fill="#8c8c8c" d="M6 19c0 1.1.9 2 2 2h8c1.1 0 2-.9 2-2V7H6v12zM19 4h-3.5l-1-1h-5l-1 1H5v2h14V4z"/></svg>
<div class="r" style="left:0px;top:179px;width:1705px;height:1px;background:#2f2f2f;"></div>
<div class="r" style="left:533px;top:148px;width:1px;height:31px;background:#313131;"></div>
<div class="r" style="left:901px;top:148px;width:1px;height:31px;background:#313131;"></div>
<div class="r" style="left:999px;top:148px;width:1px;height:31px;background:#313131;"></div>
<div class="r" style="left:1113px;top:148px;width:1px;height:31px;background:#313131;"></div>
<div class="r" style="left:1285px;top:148px;width:1px;height:31px;background:#292929;"></div>
<div class="r" style="left:1457px;top:148px;width:1px;height:31px;background:#292929;"></div>
<div class="r" style="left:1590px;top:148px;width:1px;height:31px;background:#2f2f2f;"></div>
<svg class="i" style="left:42.30px;top:155.60px;" width="23" height="17" viewBox="0 0 23 17"><path d="M1.5 0H9.2L11.7 3.4H21.2Q22.7 3.4 22.7 4.9V15.1Q22.7 16.6 21.2 16.6H1.5Q0 16.6 0 15.1V1.5Q0 0 1.5 0Z" fill="#456a98"/></svg>
<div class="t" style="left:76.00px;top:157.12px;font-size:16.4px;line-height:16.4px;color:#ffffff;font-weight:400;">evaporation</div>
<div class="t" style="left:540.00px;top:156.94px;font-size:14.25px;line-height:14.25px;color:#ffffff;font-weight:400;">Info Evaporation data</div>
<svg class="i" style="left:903.00px;top:157.00px;" width="18" height="18" viewBox="0 0 18 18"><rect x="0.8" y="0.8" width="16.4" height="16.4" rx="2.300" fill="none" stroke="#dcdcdc" stroke-width="1.500"/><rect x="8.400" y="3" width="1.200" height="10.500" fill="#bdbdbd"/><path d="M7 4.500a2 2 0 0 1 4 0V5.800H7z" fill="#fff"/><circle cx="9" cy="14.500" r="1.500" fill="none" stroke="#dcdcdc" stroke-width="1"/></svg>
<div class="t" style="left:926.00px;top:159.10px;font-size:11.7px;line-height:11.7px;color:#ffffff;font-weight:400;">channel</div>
<div class="t" style="left:1600.30px;top:161.15px;font-size:14px;line-height:14px;color:#ffffff;font-weight:400;letter-spacing:-0.65px;">664</div>
<svg class="i" style="left:1631.00px;top:153.00px;" width="24" height="24" viewBox="0 0 24 24"><path fill="#8c8c8c" d="M3 17.25V21h3.75L17.81 9.94l-3.75-3.75L3 17.25zM20.71 7.04c.39-.39.39-1.02 0-1.41l-2.34-2.34c-.39-.39-1.02-.39-1.41 0l-1.83 1.83 3.75 3.75 1.83-1.83z"/></svg>
<svg class="i" style="left:1657.00px;top:153.00px;" width="24" height="24" viewBox="0 0 24 24"><path fill="#8c8c8c" d="M6 19c0 1.1.9 2 2 2h8c1.1 0 2-.9 2-2V7H6v12zM19 4h-3.5l-1-1h-5l-1 1H5v2h14V4z"/></svg>
<div class="r" style="left:0px;top:211px;width:1705px;height:1px;background:#2f2f2f;"></div>
<div class="r" style="left:533px;top:180px;width:1px;height:31px;background:#313131;"></div>
<div class="r" style="left:901px;top:180px;width:1px;height:31px;background:#313131;"></div>
<div class="r" style="left:999px;top:180px;width:1px;height:31px;background:#313131;"></div>
<div class="r" style="left:1113px;top:180px;width:1px;height:31px;background:#313131;"></div>
<div class="r" style="left:1285px;top:180px;width:1px;height:31px;background:#292929;"></div>
<div class="r" style="left:1457px;top:180px;width:1px;height:31px;background:#292929;"></div>
<div class="r" style="left:1590px;top:180px;width:1px;height:31px;background:#2f2f2f;"></div>
<svg class="i" style="left:42.30px;top:187.60px;" width="23" height="17" viewBox="0 0 23 17"><path d="M1.5 0H9.2L11.7 3.4H21.2Q22.7 3.4 22.7 4.9V15.1Q22.7 16.6 21.2 16.6H1.5Q0 16.6 0 15.1V1.5Q0 0 1.5 0Z" fill="#456a98"/></svg>
<div class="t" style="left:76.00px;top:189.12px;font-size:16.4px;line-height:16.4px;color:#ffffff;font-weight:400;">info</div>
<svg class="i" style="left:507.00px;top:184.00px;" width="24" height="24" viewBox="0 0 24 24"><circle cx="12" cy="12" r="12" fill="#fff"/><rect x="11" y="6.2" width="2" height="2" fill="#000"/><rect x="11" y="10" width="2" height="7.800" fill="#000"/></svg>
<div class="t" style="left:540.00px;top:188.94px;font-size:14.25px;line-height:14.25px;color:#ffffff;font-weight:400;">Info Logs</div>
<svg class="i" style="left:903.00px;top:189.00px;" width="18" height="18" viewBox="0 0 18 18"><rect x="0.8" y="0.8" width="16.4" height="16.4" rx="2.300" fill="none" stroke="#dcdcdc" stroke-width="1.500"/><rect x="8.400" y="3" width="1.200" height="10.500" fill="#bdbdbd"/><path d="M7 4.500a2 2 0 0 1 4 0V5.800H7z" fill="#fff"/><circle cx="9" cy="14.500" r="1.500" fill="none" stroke="#dcdcdc" stroke-width="1"/></svg>
<div class="t" style="left:926.00px;top:191.10px;font-size:11.7px;line-height:11.7px;color:#ffffff;font-weight:400;">channel</div>
<div class="t" style="left:1600.30px;top:193.15px;font-size:14px;line-height:14px;color:#ffffff;font-weight:400;letter-spacing:-0.65px;">664</div>
<svg class="i" style="left:1631.00px;top:185.00px;" width="24" height="24" viewBox="0 0 24 24"><path fill="#8c8c8c" d="M3 17.25V21h3.75L17.81 9.94l-3.75-3.75L3 17.25zM20.71 7.04c.39-.39.39-1.02 0-1.41l-2.34-2.34c-.39-.39-1.02-.39-1.41 0l-1.83 1.83 3.75 3.75 1.83-1.83z"/></svg>
<svg class="i" style="left:1657.00px;top:185.00px;" width="24" height="24" viewBox="0 0 24 24"><path fill="#8c8c8c" d="M6 19c0 1.1.9 2 2 2h8c1.1 0 2-.9 2-2V7H6v12zM19 4h-3.5l-1-1h-5l-1 1H5v2h14V4z"/></svg>
<div class="r" style="left:0px;top:243px;width:1705px;height:1px;background:#2f2f2f;"></div>
<div class="r" style="left:533px;top:212px;width:1px;height:31px;background:#313131;"></div>
<div class="r" style="left:901px;top:212px;width:1px;height:31px;background:#313131;"></div>
<div class="r" style="left:999px;top:212px;width:1px;height:31px;background:#313131;"></div>
<div class="r" style="left:1113px;top:212px;width:1px;height:31px;background:#313131;"></div>
<div class="r" style="left:1285px;top:212px;width:1px;height:31px;background:#292929;"></div>
<div class="r" style="left:1457px;top:212px;width:1px;height:31px;background:#292929;"></div>
<div class="r" style="left:1590px;top:212px;width:1px;height:31px;background:#2f2f2f;"></div>
<svg class="i" style="left:42.30px;top:219.60px;" width="26" height="17" viewBox="0 0 26 17"><path d="M1.5 0H9.2L11.7 3.4H19.7Q21.2 3.4 21.2 4.9V7.5H5.8Q4.3 7.5 3.6 8.7L0 15.3V1.5Q0 0 1.5 0Z" fill="#456a98"/><path d="M5.4 9.2Q5.9 8.4 6.9 8.4H24.4Q25.6 8.4 25.2 9.3L21.5 15.9Q21.1 16.6 20.3 16.6H1.5Q0.6 16.6 1 15.8Z" fill="#456a98"/></svg>
<div class="t" style="left:76.00px;top:221.12px;font-size:16.4px;line-height:16.4px;color:#ffffff;font-weight:400;">sprinkle</div>
<div class="r" style="left:1605px;top:226px;width:13px;height:1px;background:#7a7a7a;"></div>
<svg class="i" style="left:1657.00px;top:215.10px;transform-origin:12px 12px;transform:scale(1.04);" width="24" height="24" viewBox="0 0 24 24"><path fill="#8c8c8c" d="M6 19c0 1.1.9 2 2 2h8c1.1 0 2-.9 2-2V7H6v12zM19 4h-3.5l-1-1h-5l-1 1H5v2h14V4z"/></svg>
<div class="r" style="left:0px;top:275px;width:1705px;height:1px;background:#2f2f2f;"></div>
<div class="r" style="left:533px;top:244px;width:1px;height:31px;background:#313131;"></div>
<div class="r" style="left:901px;top:244px;width:1px;height:31px;background:#313131;"></div>
<div class="r" style="left:999px;top:244px;width:1px;height:31px;background:#313131;"></div>
<div class="r" style="left:1113px;top:244px;width:1px;height:31px;background:#313131;"></div>
<div class="r" style="left:1285px;top:244px;width:1px;height:31px;background:#292929;"></div>
<div class="r" style="left:1457px;top:244px;width:1px;height:31px;background:#292929;"></div>
<div class="r" style="left:1590px;top:244px;width:1px;height:31px;background:#2f2f2f;"></div>
<svg class="i" style="left:58.30px;top:251.60px;" width="26" height="17" viewBox="0 0 26 17"><path d="M1.5 0H9.2L11.7 3.4H19.7Q21.2 3.4 21.2 4.9V7.5H5.8Q4.3 7.5 3.6 8.7L0 15.3V1.5Q0 0 1.5 0Z" fill="#456a98"/><path d="M5.4 9.2Q5.9 8.4 6.9 8.4H24.4Q25.6 8.4 25.2 9.3L21.5 15.9Q21.1 16.6 20.3 16.6H1.5Q0.6 16.6 1 15.8Z" fill="#456a98"/></svg>
<div class="t" style="left:92.00px;top:253.12px;font-size:16.4px;line-height:16.4px;color:#ffffff;font-weight:400;">Ventil_1</div>
<div class="t" style="left:540.00px;top:252.94px;font-size:14.25px;line-height:14.25px;color:#ffffff;font-weight:400;">Ventil_1</div>
<svg class="i" style="left:903.00px;top:253.00px;" width="18" height="18" viewBox="0 0 18 18"><rect x="0.8" y="0.8" width="16.4" height="16.4" rx="2.300" fill="none" stroke="#dcdcdc" stroke-width="1.500"/><rect x="8.400" y="3" width="1.200" height="10.500" fill="#bdbdbd"/><path d="M7 4.500a2 2 0 0 1 4 0V5.800H7z" fill="#fff"/><circle cx="9" cy="14.500" r="1.500" fill="none" stroke="#dcdcdc" stroke-width="1"/></svg>
<div class="t" style="left:926.00px;top:255.10px;font-size:11.7px;line-height:11.7px;color:#ffffff;font-weight:400;">channel</div>
<div class="t" style="left:1600.30px;top:257.15px;font-size:14px;line-height:14px;color:#ffffff;font-weight:400;letter-spacing:-0.65px;">664</div>
<svg class="i" style="left:1631.00px;top:249.00px;" width="24" height="24" viewBox="0 0 24 24"><path fill="#8c8c8c" d="M3 17.25V21h3.75L17.81 9.94l-3.75-3.75L3 17.25zM20.71 7.04c.39-.39.39-1.02 0-1.41l-2.34-2.34c-.39-.39-1.02-.39-1.41 0l-1.83 1.83 3.75 3.75 1.83-1.83z"/></svg>
<svg class="i" style="left:1657.00px;top:249.00px;" width="24" height="24" viewBox="0 0 24 24"><path fill="#8c8c8c" d="M6 19c0 1.1.9 2 2 2h8c1.1 0 2-.9 2-2V7H6v12zM19 4h-3.5l-1-1h-5l-1 1H5v2h14V4z"/></svg>
<div class="r" style="left:0px;top:307px;width:1705px;height:1px;background:#2f2f2f;"></div>
<div class="r" style="left:533px;top:276px;width:1px;height:31px;background:#313131;"></div>
<div class="r" style="left:901px;top:276px;width:1px;height:31px;background:#313131;"></div>
<div class="r" style="left:999px;top:276px;width:1px;height:31px;background:#313131;"></div>
<div class="r" style="left:1113px;top:276px;width:1px;height:31px;background:#313131;"></div>
<div class="r" style="left:1285px;top:276px;width:1px;height:31px;background:#292929;"></div>
<div class="r" style="left:1457px;top:276px;width:1px;height:31px;background:#292929;"></div>
<div class="r" style="left:1590px;top:276px;width:1px;height:31px;background:#2f2f2f;"></div>
<svg class="i" style="left:74.30px;top:283.60px;" width="23" height="17" viewBox="0 0 23 17"><path d="M1.5 0H9.2L11.7 3.4H21.2Q22.7 3.4 22.7 4.9V15.1Q22.7 16.6 21.2 16.6H1.5Q0 16.6 0 15.1V1.5Q0 0 1.5 0Z" fill="#456a98"/></svg>
<div class="t" style="left:108.00px;top:285.12px;font-size:16.4px;line-height:16.4px;color:#ffffff;font-weight:400;">history</div>
<div class="t" style="left:540.00px;top:284.94px;font-size:14.25px;line-height:14.25px;color:#ffffff;font-weight:400;">Ventil_1 =&gt; History</div>
<svg class="i" style="left:903.00px;top:285.00px;" width="18" height="18" viewBox="0 0 18 18"><rect x="0.8" y="0.8" width="16.4" height="16.4" rx="2.300" fill="none" stroke="#dcdcdc" stroke-width="1.500"/><rect x="8.400" y="3" width="1.200" height="10.500" fill="#bdbdbd"/><path d="M7 4.500a2 2 0 0 1 4 0V5.800H7z" fill="#fff"/><circle cx="9" cy="14.500" r="1.500" fill="none" stroke="#dcdcdc" stroke-width="1"/></svg>
<div class="t" style="left:926.00px;top:287.10px;font-size:11.7px;line-height:11.7px;color:#ffffff;font-weight:400;">channel</div>
<div class="t" style="left:1600.30px;top:289.15px;font-size:14px;line-height:14px;color:#ffffff;font-weight:400;letter-spacing:-0.65px;">664</div>
<svg class="i" style="left:1631.00px;top:281.00px;" width="24" height="24" viewBox="0 0 24 24"><path fill="#8c8c8c" d="M3 17.25V21h3.75L17.81 9.94l-3.75-3.75L3 17.25zM20.71 7.04c.39-.39.39-1.02 0-1.41l-2.34-2.34c-.39-.39-1.02-.39-1.41 0l-1.83 1.83 3.75 3.75 1.83-1.83z"/></svg>
<svg class="i" style="left:1657.00px;top:281.00px;" width="24" height="24" viewBox="0 0 24 24"><path fill="#8c8c8c" d="M6 19c0 1.1.9 2 2 2h8c1.1 0 2-.9 2-2V7H6v12zM19 4h-3.5l-1-1h-5l-1 1H5v2h14V4z"/></svg>
<div class="r" style="left:0px;top:339px;width:1705px;height:1px;background:#2f2f2f;"></div>
<div class="r" style="left:533px;top:308px;width:1px;height:31px;background:#313131;"></div>
<div class="r" style="left:902px;top:308px;width:1px;height:31px;background:#313131;"></div>
<div class="r" style="left:999px;top:308px;width:1px;height:31px;background:#313131;"></div>
<div class="r" style="left:1113px;top:308px;width:1px;height:31px;background:#313131;"></div>
<div class="r" style="left:1285px;top:308px;width:1px;height:31px;background:#292929;"></div>
<div class="r" style="left:1457px;top:308px;width:1px;height:31px;background:#292929;"></div>
<div class="r" style="left:1590px;top:308px;width:1px;height:31px;background:#2f2f2f;"></div>
<svg class="i" style="left:77.00px;top:313.00px;" width="17" height="22" viewBox="0 0 17 22"><path d="M2 3Q2 2 3 2H11.8L15 5.2V19Q15 20 14 20H3Q2 20 2 19Z" fill="none" stroke="#fff" stroke-width="2.1" stroke-linejoin="round"/><path d="M10.4 2.2V6.5H14.8" fill="none" stroke="#fff" stroke-width="1.5"/><rect x="4.8" y="12" width="7.5" height="6" rx="0.8" fill="#fff"/><path d="M6.3 12.2V10.3A2.25 2.25 0 0 1 10.8 10.3V12.2" fill="none" stroke="#fff" stroke-width="1.5"/><rect x="8.1" y="13.8" width="0.9" height="2" fill="#1e1e1e"/></svg>
<div class="t" style="left:106.00px;top:317.12px;font-size:16.4px;line-height:16.4px;color:#ffffff;font-weight:400;">actualSoilMoisture</div>
<div class="t" style="left:540.00px;top:316.94px;font-size:14.25px;line-height:14.25px;color:#ffffff;font-weight:400;">Ventil_1 =&gt; Berechnete Bodenfeuchte in%</div>
<svg class="i" style="left:904.00px;top:317.00px;" width="18" height="18" viewBox="0 0 18 18"><rect x="0.8" y="0.8" width="16.400" height="16.400" rx="2.300" fill="none" stroke="#dcdcdc" stroke-width="1.500"/><circle cx="9" cy="9" r="3.400" fill="none" stroke="#dcdcdc" stroke-width="1.150"/></svg>
<div class="t" style="left:926.00px;top:318.84px;font-size:12px;line-height:12px;color:#ffffff;font-weight:400;">state</div>
<div class="t" style="left:1000.00px;top:318.84px;font-size:12px;line-height:12px;color:#ffffff;font-weight:400;">state</div>
<div class="t" style="left:1458.00px;top:316.88px;font-size:15.5px;line-height:15.5px;color:#ffffff;font-weight:400;">20,8 <span style="color:#bdbdbd">%</span></div>
<div class="t" style="left:1600.30px;top:321.15px;font-size:14px;line-height:14px;color:#ffffff;font-weight:400;letter-spacing:-0.65px;">664</div>
<svg class="i" style="left:1631.00px;top:313.00px;" width="24" height="24" viewBox="0 0 24 24"><path fill="#8c8c8c" d="M3 17.25V21h3.75L17.81 9.94l-3.75-3.75L3 17.25zM20.71 7.04c.39-.39.39-1.02 0-1.41l-2.34-2.34c-.39-.39-1.02-.39-1.41 0l-1.83 1.83 3.75 3.75 1.83-1.83z"/></svg>
<svg class="i" style="left:1657.00px;top:313.00px;" width="24" height="24" viewBox="0 0 24 24"><path fill="#8c8c8c" d="M6 19c0 1.1.9 2 2 2h8c1.1 0 2-.9 2-2V7H6v12zM19 4h-3.5l-1-1h-5l-1 1H5v2h14V4z"/></svg>
<svg class="i" style="left:1681.00px;top:313.00px;" width="24" height="24" viewBox="0 0 24 24"><path fill="#4d4d4d" d="M19.14 12.94c.04-.3.06-.61.06-.94 0-.32-.02-.64-.07-.94l2.03-1.58c.18-.14.23-.41.12-.61l-1.92-3.32c-.12-.22-.37-.29-.59-.22l-2.39.96c-.5-.38-1.03-.7-1.62-.94l-.36-2.54c-.04-.24-.24-.41-.48-.41h-3.84c-.24 0-.43.17-.47.41l-.36 2.54c-.59.24-1.13.57-1.62.94l-2.39-.96c-.22-.08-.47 0-.59.22L2.74 8.87c-.12.21-.08.47.12.61l2.03 1.58c-.05.3-.09.63-.09.94s.02.64.07.94l-2.03 1.58c-.18.14-.23.41-.12.61l1.92 3.32c.12.22.37.29.59.22l2.39-.96c.5.38 1.03.7 1.62.94l.36 2.54c.05.24.24.41.48.41h3.84c.24 0 .44-.17.47-.41l.36-2.54c.59-.24 1.13-.56 1.62-.94l2.39.96c.22.08.47 0 .59-.22l1.92-3.32c.12-.22.07-.47-.12-.61l-2.01-1.58zM12 15.6c-1.98 0-3.6-1.62-3.6-3.6s1.62-3.6 3.6-3.6 3.6 1.62 3.6 3.6-1.62 3.6-3.6 3.6z"/></svg>
<div class="r" style="left:0px;top:371px;width:1705px;height:1px;background:#2f2f2f;"></div>
<div class="r" style="left:533px;top:340px;width:1px;height:31px;background:#313131;"></div>
<div class="r" style="left:902px;top:340px;width:1px;height:31px;background:#313131;"></div>
<div class="r" style="left:999px;top:340px;width:1px;height:31px;background:#313131;"></div>
<div class="r" style="left:1113px;top:340px;width:1px;height:31px;background:#313131;"></div>
<div class="r" style="left:1285px;top:340px;width:1px;height:31px;background:#292929;"></div>
<div class="r" style="left:1457px;top:340px;width:1px;height:31px;background:#292929;"></div>
<div class="r" style="left:1590px;top:340px;width:1px;height:31px;background:#2f2f2f;"></div>
<svg class="i" style="left:77.00px;top:345.00px;" width="17" height="22" viewBox="0 0 17 22"><path d="M2 3Q2 2 3 2H11.8L15 5.2V19Q15 20 14 20H3Q2 20 2 19Z" fill="none" stroke="#fff" stroke-width="2.1" stroke-linejoin="round"/><path d="M10.4 2.2V6.5H14.8" fill="none" stroke="#fff" stroke-width="1.5"/></svg>
<div class="t" style="left:106.00px;top:349.12px;font-size:16.4px;line-height:16.4px;color:#ffffff;font-weight:400;">autoOn</div>
<div class="t" style="left:540.00px;top:348.94px;font-size:14.25px;line-height:14.25px;color:#ffffff;font-weight:400;">Ventil_1 =&gt; Switch automatic mode on / off</div>
<svg class="i" style="left:904.00px;top:349.00px;" width="18" height="18" viewBox="0 0 18 18"><rect x="0.8" y="0.8" width="16.400" height="16.400" rx="2.300" fill="none" stroke="#dcdcdc" stroke-width="1.500"/><circle cx="9" cy="9" r="3.400" fill="none" stroke="#dcdcdc" stroke-width="1.150"/></svg>
<div class="t" style="left:926.00px;top:350.84px;font-size:12px;line-height:12px;color:#ffffff;font-weight:400;">state</div>
<div class="t" style="left:1000.00px;top:350.84px;font-size:12px;line-height:12px;color:#ffffff;font-weight:400;">Switch</div>
<div class="t" style="left:1458.00px;top:348.88px;font-size:15.5px;line-height:15.5px;color:#ffffff;font-weight:400;">off<span style="color:#bdbdbd">(false)</span></div>
<div class="t" style="left:1600.30px;top:353.15px;font-size:14px;line-height:14px;color:#ffffff;font-weight:400;letter-spacing:-0.65px;">664</div>
<svg class="i" style="left:1631.00px;top:345.00px;" width="24" height="24" viewBox="0 0 24 24"><path fill="#8c8c8c" d="M3 17.25V21h3.75L17.81 9.94l-3.75-3.75L3 17.25zM20.71 7.04c.39-.39.39-1.02 0-1.41l-2.34-2.34c-.39-.39-1.02-.39-1.41 0l-1.83 1.83 3.75 3.75 1.83-1.83z"/></svg>
<svg class="i" style="left:1657.00px;top:345.00px;" width="24" height="24" viewBox="0 0 24 24"><path fill="#8c8c8c" d="M6 19c0 1.1.9 2 2 2h8c1.1 0 2-.9 2-2V7H6v12zM19 4h-3.5l-1-1h-5l-1 1H5v2h14V4z"/></svg>
<svg class="i" style="left:1681.00px;top:345.00px;" width="24" height="24" viewBox="0 0 24 24"><path fill="#4d4d4d" d="M19.14 12.94c.04-.3.06-.61.06-.94 0-.32-.02-.64-.07-.94l2.03-1.58c.18-.14.23-.41.12-.61l-1.92-3.32c-.12-.22-.37-.29-.59-.22l-2.39.96c-.5-.38-1.03-.7-1.62-.94l-.36-2.54c-.04-.24-.24-.41-.48-.41h-3.84c-.24 0-.43.17-.47.41l-.36 2.54c-.59.24-1.13.57-1.62.94l-2.39-.96c-.22-.08-.47 0-.59.22L2.74 8.87c-.12.21-.08.47.12.61l2.03 1.58c-.05.3-.09.63-.09.94s.02.64.07.94l-2.03 1.58c-.18.14-.23.41-.12.61l1.92 3.32c.12.22.37.29.59.22l2.39-.96c.5.38 1.03.7 1.62.94l.36 2.54c.05.24.24.41.48.41h3.84c.24 0 .44-.17.47-.41l.36-2.54c.59-.24 1.13-.56 1.62-.94l2.39.96c.22.08.47 0 .59-.22l1.92-3.32c.12-.22.07-.47-.12-.61l-2.01-1.58zM12 15.6c-1.98 0-3.6-1.62-3.6-3.6s1.62-3.6 3.6-3.6 3.6 1.62 3.6 3.6-1.62 3.6-3.6 3.6z"/></svg>
<div class="r" style="left:0px;top:403px;width:1705px;height:1px;background:#2f2f2f;"></div>
<div class="r" style="left:533px;top:372px;width:1px;height:31px;background:#313131;"></div>
<div class="r" style="left:902px;top:372px;width:1px;height:31px;background:#313131;"></div>
<div class="r" style="left:999px;top:372px;width:1px;height:31px;background:#313131;"></div>
<div class="r" style="left:1113px;top:372px;width:1px;height:31px;background:#313131;"></div>
<div class="r" style="left:1285px;top:372px;width:1px;height:31px;background:#292929;"></div>
<div class="r" style="left:1457px;top:372px;width:1px;height:31px;background:#292929;"></div>
<div class="r" style="left:1590px;top:372px;width:1px;height:31px;background:#2f2f2f;"></div>
<svg class="i" style="left:77.00px;top:377.00px;" width="17" height="22" viewBox="0 0 17 22"><path d="M2 3Q2 2 3 2H11.8L15 5.2V19Q15 20 14 20H3Q2 20 2 19Z" fill="none" stroke="#fff" stroke-width="2.1" stroke-linejoin="round"/><path d="M10.4 2.2V6.5H14.8" fill="none" stroke="#fff" stroke-width="1.5"/><rect x="4.8" y="12" width="7.5" height="6" rx="0.8" fill="#fff"/><path d="M6.3 12.2V10.3A2.25 2.25 0 0 1 10.8 10.3V12.2" fill="none" stroke="#fff" stroke-width="1.5"/><rect x="8.1" y="13.8" width="0.9" height="2" fill="#1e1e1e"/></svg>
<div class="t" style="left:106.00px;top:381.12px;font-size:16.4px;line-height:16.4px;color:#ffffff;font-weight:400;">countdown</div>
<div class="t" style="left:540.00px;top:380.94px;font-size:14.25px;line-height:14.25px;color:#ffffff;font-weight:400;">Ventil_1 =&gt; countdown of sprinkler</div>
<svg class="i" style="left:904.00px;top:381.00px;" width="18" height="18" viewBox="0 0 18 18"><rect x="0.8" y="0.8" width="16.400" height="16.400" rx="2.300" fill="none" stroke="#dcdcdc" stroke-width="1.500"/><circle cx="9" cy="9" r="3.400" fill="none" stroke="#dcdcdc" stroke-width="1.150"/></svg>
<div class="t" style="left:926.00px;top:382.84px;font-size:12px;line-height:12px;color:#ffffff;font-weight:400;">state</div>
<div class="t" style="left:1000.00px;top:382.84px;font-size:12px;line-height:12px;color:#ffffff;font-weight:400;">state</div>
<div class="t" style="left:1458.00px;top:380.88px;font-size:15.5px;line-height:15.5px;color:#ffffff;font-weight:400;">0</div>
<div class="t" style="left:1600.30px;top:385.15px;font-size:14px;line-height:14px;color:#ffffff;font-weight:400;letter-spacing:-0.65px;">664</div>
<svg class="i" style="left:1631.00px;top:377.00px;" width="24" height="24" viewBox="0 0 24 24"><path fill="#8c8c8c" d="M3 17.25V21h3.75L17.81 9.94l-3.75-3.75L3 17.25zM20.71 7.04c.39-.39.39-1.02 0-1.41l-2.34-2.34c-.39-.39-1.02-.39-1.41 0l-1.83 1.83 3.75 3.75 1.83-1.83z"/></svg>
<svg class="i" style="left:1657.00px;top:377.00px;" width="24" height="24" viewBox="0 0 24 24"><path fill="#8c8c8c" d="M6 19c0 1.1.9 2 2 2h8c1.1 0 2-.9 2-2V7H6v12zM19 4h-3.5l-1-1h-5l-1 1H5v2h14V4z"/></svg>
<svg class="i" style="left:1681.00px;top:377.00px;" width="24" height="24" viewBox="0 0 24 24"><path fill="#4d4d4d" d="M19.14 12.94c.04-.3.06-.61.06-.94 0-.32-.02-.64-.07-.94l2.03-1.58c.18-.14.23-.41.12-.61l-1.92-3.32c-.12-.22-.37-.29-.59-.22l-2.39.96c-.5-.38-1.03-.7-1.62-.94l-.36-2.54c-.04-.24-.24-.41-.48-.41h-3.84c-.24 0-.43.17-.47.41l-.36 2.54c-.59.24-1.13.57-1.62.94l-2.39-.96c-.22-.08-.47 0-.59.22L2.74 8.87c-.12.21-.08.47.12.61l2.03 1.58c-.05.3-.09.63-.09.94s.02.64.07.94l-2.03 1.58c-.18.14-.23.41-.12.61l1.92 3.32c.12.22.37.29.59.22l2.39-.96c.5.38 1.03.7 1.62.94l.36 2.54c.05.24.24.41.48.41h3.84c.24 0 .44-.17.47-.41l.36-2.54c.59-.24 1.13-.56 1.62-.94l2.39.96c.22.08.47 0 .59-.22l1.92-3.32c.12-.22.07-.47-.12-.61l-2.01-1.58zM12 15.6c-1.98 0-3.6-1.62-3.6-3.6s1.62-3.6 3.6-3.6 3.6 1.62 3.6 3.6-1.62 3.6-3.6 3.6z"/></svg>
<div class="r" style="left:0px;top:404px;width:1705px;height:32px;background:#4dabf5;"></div>
<div class="r" style="left:533px;top:404px;width:1px;height:31px;background:rgba(0,0,0,0.06);"></div>
<div class="r" style="left:902px;top:404px;width:1px;height:31px;background:rgba(0,0,0,0.06);"></div>
<div class="r" style="left:999px;top:404px;width:1px;height:31px;background:rgba(0,0,0,0.06);"></div>
<div class="r" style="left:1113px;top:404px;width:1px;height:31px;background:rgba(0,0,0,0.06);"></div>
<div class="r" style="left:1285px;top:404px;width:1px;height:31px;background:rgba(0,0,0,0.06);"></div>
<div class="r" style="left:1457px;top:404px;width:1px;height:31px;background:rgba(0,0,0,0.06);"></div>
<div class="r" style="left:1590px;top:404px;width:1px;height:31px;background:rgba(0,0,0,0.06);"></div>
<svg class="i" style="left:77.00px;top:409.00px;" width="17" height="22" viewBox="0 0 17 22"><path d="M2 3Q2 2 3 2H11.8L15 5.2V19Q15 20 14 20H3Q2 20 2 19Z" fill="none" stroke="#fff" stroke-width="2.1" stroke-linejoin="round"/><path d="M10.4 2.2V6.5H14.8" fill="none" stroke="#fff" stroke-width="1.5"/></svg>
<div class="t" style="left:106.00px;top:413.12px;font-size:16.4px;line-height:16.4px;color:#ffffff;font-weight:400;">runningTime</div>
<div class="t" style="left:540.00px;top:412.94px;font-size:14.25px;line-height:14.25px;color:#ffffff;font-weight:400;">Ventil_1 =&gt; running time of sprinkler</div>
<svg class="i" style="left:904.00px;top:413.00px;" width="18" height="18" viewBox="0 0 18 18"><rect x="0.8" y="0.8" width="16.400" height="16.400" rx="2.300" fill="none" stroke="#dcdcdc" stroke-width="1.500"/><circle cx="9" cy="9" r="3.400" fill="none" stroke="#dcdcdc" stroke-width="1.150"/></svg>
<div class="t" style="left:926.00px;top:414.84px;font-size:12px;line-height:12px;color:#ffffff;font-weight:400;">state</div>
<div class="t" style="left:1000.00px;top:414.84px;font-size:12px;line-height:12px;color:#ffffff;font-weight:400;">state</div>
<div class="t" style="left:1458.00px;top:412.88px;font-size:15.5px;line-height:15.5px;color:#ffffff;font-weight:400;">0</div>
<div class="t" style="left:1600.30px;top:417.15px;font-size:14px;line-height:14px;color:#ffffff;font-weight:400;letter-spacing:-0.65px;">664</div>
<svg class="i" style="left:1631.00px;top:409.00px;" width="24" height="24" viewBox="0 0 24 24"><path fill="rgba(255,255,255,0.49)" d="M3 17.25V21h3.75L17.81 9.94l-3.75-3.75L3 17.25zM20.71 7.04c.39-.39.39-1.02 0-1.41l-2.34-2.34c-.39-.39-1.02-.39-1.41 0l-1.83 1.83 3.75 3.75 1.83-1.83z"/></svg>
<svg class="i" style="left:1657.00px;top:409.00px;" width="24" height="24" viewBox="0 0 24 24"><path fill="rgba(255,255,255,0.49)" d="M6 19c0 1.1.9 2 2 2h8c1.1 0 2-.9 2-2V7H6v12zM19 4h-3.5l-1-1h-5l-1 1H5v2h14V4z"/></svg>
<svg class="i" style="left:1681.00px;top:409.00px;" width="24" height="24" viewBox="0 0 24 24"><path fill="rgba(255,255,255,0.21)" d="M19.14 12.94c.04-.3.06-.61.06-.94 0-.32-.02-.64-.07-.94l2.03-1.58c.18-.14.23-.41.12-.61l-1.92-3.32c-.12-.22-.37-.29-.59-.22l-2.39.96c-.5-.38-1.03-.7-1.62-.94l-.36-2.54c-.04-.24-.24-.41-.48-.41h-3.84c-.24 0-.43.17-.47.41l-.36 2.54c-.59.24-1.13.57-1.62.94l-2.39-.96c-.22-.08-.47 0-.59.22L2.74 8.87c-.12.21-.08.47.12.61l2.03 1.58c-.05.3-.09.63-.09.94s.02.64.07.94l-2.03 1.58c-.18.14-.23.41-.12.61l1.92 3.32c.12.22.37.29.59.22l2.39-.96c.5.38 1.03.7 1.62.94l.36 2.54c.05.24.24.41.48.41h3.84c.24 0 .44-.17.47-.41l.36-2.54c.59-.24 1.13-.56 1.62-.94l2.39.96c.22.08.47 0 .59-.22l1.92-3.32c.12-.22.07-.47-.12-.61l-2.01-1.58zM12 15.6c-1.98 0-3.6-1.62-3.6-3.6s1.62-3.6 3.6-3.6 3.6 1.62 3.6 3.6-1.62 3.6-3.6 3.6z"/></svg>
<div class="r" style="left:0px;top:467px;width:1705px;height:1px;background:#2f2f2f;"></div>
<div class="r" style="left:533px;top:436px;width:1px;height:31px;background:#313131;"></div>
<div class="r" style="left:902px;top:436px;width:1px;height:31px;background:#313131;"></div>
<div class="r" style="left:999px;top:436px;width:1px;height:31px;background:#313131;"></div>
<div class="r" style="left:1113px;top:436px;width:1px;height:31px;background:#313131;"></div>
<div class="r" style="left:1285px;top:436px;width:1px;height:31px;background:#292929;"></div>
<div class="r" style="left:1457px;top:436px;width:1px;height:31px;background:#292929;"></div>
<div class="r" style="left:1590px;top:436px;width:1px;height:31px;background:#2f2f2f;"></div>
<svg class="i" style="left:77.00px;top:441.00px;" width="17" height="22" viewBox="0 0 17 22"><path d="M2 3Q2 2 3 2H11.8L15 5.2V19Q15 20 14 20H3Q2 20 2 19Z" fill="none" stroke="#fff" stroke-width="2.1" stroke-linejoin="round"/><path d="M10.4 2.2V6.5H14.8" fill="none" stroke="#fff" stroke-width="1.5"/><rect x="4.8" y="12" width="7.5" height="6" rx="0.8" fill="#fff"/><path d="M6.3 12.2V10.3A2.25 2.25 0 0 1 10.8 10.3V12.2" fill="none" stroke="#fff" stroke-width="1.5"/><rect x="8.1" y="13.8" width="0.9" height="2" fill="#1e1e1e"/></svg>
<div class="t" style="left:106.00px;top:445.12px;font-size:16.4px;line-height:16.4px;color:#ffffff;font-weight:400;">sprinklerState</div>
<div class="t" style="left:540.00px;top:444.94px;font-size:14.25px;line-height:14.25px;color:#ffffff;font-weight:400;">Ventil_1 =&gt; actual state of sprinkler</div>
<svg class="i" style="left:904.00px;top:445.00px;" width="18" height="18" viewBox="0 0 18 18"><rect x="0.8" y="0.8" width="16.400" height="16.400" rx="2.300" fill="none" stroke="#dcdcdc" stroke-width="1.500"/><circle cx="9" cy="9" r="3.400" fill="none" stroke="#dcdcdc" stroke-width="1.150"/></svg>
<div class="t" style="left:926.00px;top:446.84px;font-size:12px;line-height:12px;color:#ffffff;font-weight:400;">state</div>
<div class="t" style="left:1000.00px;top:446.84px;font-size:12px;line-height:12px;color:#ffffff;font-weight:400;">state</div>
<div class="t" style="left:1458.00px;top:444.88px;font-size:15.5px;line-height:15.5px;color:#ffffff;font-weight:400;">off<span style="color:#bdbdbd">(0)</span></div>
<div class="t" style="left:1600.30px;top:449.15px;font-size:14px;line-height:14px;color:#ffffff;font-weight:400;letter-spacing:-0.65px;">664</div>
<svg class="i" style="left:1631.00px;top:441.00px;" width="24" height="24" viewBox="0 0 24 24"><path fill="#8c8c8c" d="M3 17.25V21h3.75L17.81 9.94l-3.75-3.75L3 17.25zM20.71 7.04c.39-.39.39-1.02 0-1.41l-2.34-2.34c-.39-.39-1.02-.39-1.41 0l-1.83 1.83 3.75 3.75 1.83-1.83z"/></svg>
<svg class="i" style="left:1657.00px;top:441.00px;" width="24" height="24" viewBox="0 0 24 24"><path fill="#8c8c8c" d="M6 19c0 1.1.9 2 2 2h8c1.1 0 2-.9 2-2V7H6v12zM19 4h-3.5l-1-1h-5l-1 1H5v2h14V4z"/></svg>
<svg class="i" style="left:1681.00px;top:441.00px;" width="24" height="24" viewBox="0 0 24 24"><path fill="#4d4d4d" d="M19.14 12.94c.04-.3.06-.61.06-.94 0-.32-.02-.64-.07-.94l2.03-1.58c.18-.14.23-.41.12-.61l-1.92-3.32c-.12-.22-.37-.29-.59-.22l-2.39.96c-.5-.38-1.03-.7-1.62-.94l-.36-2.54c-.04-.24-.24-.41-.48-.41h-3.84c-.24 0-.43.17-.47.41l-.36 2.54c-.59.24-1.13.57-1.62.94l-2.39-.96c-.22-.08-.47 0-.59.22L2.74 8.87c-.12.21-.08.47.12.61l2.03 1.58c-.05.3-.09.63-.09.94s.02.64.07.94l-2.03 1.58c-.18.14-.23.41-.12.61l1.92 3.32c.12.22.37.29.59.22l2.39-.96c.5.38 1.03.7 1.62.94l.36 2.54c.05.24.24.41.48.41h3.84c.24 0 .44-.17.47-.41l.36-2.54c.59-.24 1.13-.56 1.62-.94l2.39.96c.22.08.47 0 .59-.22l1.92-3.32c.12-.22.07-.47-.12-.61l-2.01-1.58zM12 15.6c-1.98 0-3.6-1.62-3.6-3.6s1.62-3.6 3.6-3.6 3.6 1.62 3.6 3.6-1.62 3.6-3.6 3.6z"/></svg>
<div class="r" style="left:0px;top:499px;width:1705px;height:1px;background:#2f2f2f;"></div>
<div class="r" style="left:533px;top:468px;width:1px;height:31px;background:#313131;"></div>
<div class="r" style="left:902px;top:468px;width:1px;height:31px;background:#313131;"></div>
<div class="r" style="left:999px;top:468px;width:1px;height:31px;background:#313131;"></div>
<div class="r" style="left:1113px;top:468px;width:1px;height:31px;background:#313131;"></div>
<div class="r" style="left:1285px;top:468px;width:1px;height:31px;background:#292929;"></div>
<div class="r" style="left:1457px;top:468px;width:1px;height:31px;background:#292929;"></div>
<div class="r" style="left:1590px;top:468px;width:1px;height:31px;background:#2f2f2f;"></div>
<svg class="i" style="left:77.00px;top:473.00px;" width="17" height="22" viewBox="0 0 17 22"><path d="M2 3Q2 2 3 2H11.8L15 5.2V19Q15 20 14 20H3Q2 20 2 19Z" fill="none" stroke="#fff" stroke-width="2.1" stroke-linejoin="round"/><path d="M10.4 2.2V6.5H14.8" fill="none" stroke="#fff" stroke-width="1.5"/><rect x="4.8" y="12" width="7.5" height="6" rx="0.8" fill="#fff"/><path d="M6.3 12.2V10.3A2.25 2.25 0 0 1 10.8 10.3V12.2" fill="none" stroke="#fff" stroke-width="1.5"/><rect x="8.1" y="13.8" width="0.9" height="2" fill="#1e1e1e"/></svg>
<div class="t" style="left:106.00px;top:477.12px;font-size:16.4px;line-height:16.4px;color:#ffffff;font-weight:400;">triggerPoint</div>
<div class="t" style="left:540.00px;top:476.94px;font-size:14.25px;line-height:14.25px;color:#ffffff;font-weight:400;">Ventil_1 =&gt; Trigger point of sprinkler</div>
<svg class="i" style="left:904.00px;top:477.00px;" width="18" height="18" viewBox="0 0 18 18"><rect x="0.8" y="0.8" width="16.400" height="16.400" rx="2.300" fill="none" stroke="#dcdcdc" stroke-width="1.500"/><circle cx="9" cy="9" r="3.400" fill="none" stroke="#dcdcdc" stroke-width="1.150"/></svg>
<div class="t" style="left:926.00px;top:478.84px;font-size:12px;line-height:12px;color:#ffffff;font-weight:400;">state</div>
<div class="t" style="left:1000.00px;top:478.84px;font-size:12px;line-height:12px;color:#ffffff;font-weight:400;">state</div>
<div class="t" style="left:1458.00px;top:476.88px;font-size:15.5px;line-height:15.5px;color:#ffffff;font-weight:400;">50</div>
<div class="t" style="left:1600.30px;top:481.15px;font-size:14px;line-height:14px;color:#ffffff;font-weight:400;letter-spacing:-0.65px;">664</div>
<svg class="i" style="left:1631.00px;top:473.00px;" width="24" height="24" viewBox="0 0 24 24"><path fill="#8c8c8c" d="M3 17.25V21h3.75L17.81 9.94l-3.75-3.75L3 17.25zM20.71 7.04c.39-.39.39-1.02 0-1.41l-2.34-2.34c-.39-.39-1.02-.39-1.41 0l-1.83 1.83 3.75 3.75 1.83-1.83z"/></svg>
<svg class="i" style="left:1657.00px;top:473.00px;" width="24" height="24" viewBox="0 0 24 24"><path fill="#8c8c8c" d="M6 19c0 1.1.9 2 2 2h8c1.1 0 2-.9 2-2V7H6v12zM19 4h-3.5l-1-1h-5l-1 1H5v2h14V4z"/></svg>
<svg class="i" style="left:1681.00px;top:473.00px;" width="24" height="24" viewBox="0 0 24 24"><path fill="#4d4d4d" d="M19.14 12.94c.04-.3.06-.61.06-.94 0-.32-.02-.64-.07-.94l2.03-1.58c.18-.14.23-.41.12-.61l-1.92-3.32c-.12-.22-.37-.29-.59-.22l-2.39.96c-.5-.38-1.03-.7-1.62-.94l-.36-2.54c-.04-.24-.24-.41-.48-.41h-3.84c-.24 0-.43.17-.47.41l-.36 2.54c-.59.24-1.13.57-1.62.94l-2.39-.96c-.22-.08-.47 0-.59.22L2.74 8.87c-.12.21-.08.47.12.61l2.03 1.58c-.05.3-.09.63-.09.94s.02.64.07.94l-2.03 1.58c-.18.14-.23.41-.12.61l1.92 3.32c.12.22.37.29.59.22l2.39-.96c.5.38 1.03.7 1.62.94l.36 2.54c.05.24.24.41.48.41h3.84c.24 0 .44-.17.47-.41l.36-2.54c.59-.24 1.13-.56 1.62-.94l2.39.96c.22.08.47 0 .59-.22l1.92-3.32c.12-.22.07-.47-.12-.61l-2.01-1.58zM12 15.6c-1.98 0-3.6-1.62-3.6-3.6s1.62-3.6 3.6-3.6 3.6 1.62 3.6 3.6-1.62 3.6-3.6 3.6z"/></svg>
<div class="r" style="left:0px;top:531px;width:1705px;height:1px;background:#2f2f2f;"></div>
<div class="r" style="left:533px;top:500px;width:1px;height:31px;background:#313131;"></div>
<div class="r" style="left:901px;top:500px;width:1px;height:31px;background:#313131;"></div>
<div class="r" style="left:999px;top:500px;width:1px;height:31px;background:#313131;"></div>
<div class="r" style="left:1113px;top:500px;width:1px;height:31px;background:#313131;"></div>
<div class="r" style="left:1285px;top:500px;width:1px;height:31px;background:#292929;"></div>
<div class="r" style="left:1457px;top:500px;width:1px;height:31px;background:#292929;"></div>
<div class="r" style="left:1590px;top:500px;width:1px;height:31px;background:#2f2f2f;"></div>
<svg class="i" style="left:58.30px;top:507.60px;" width="26" height="17" viewBox="0 0 26 17"><path d="M1.5 0H9.2L11.7 3.4H19.7Q21.2 3.4 21.2 4.9V7.5H5.8Q4.3 7.5 3.6 8.7L0 15.3V1.5Q0 0 1.5 0Z" fill="#456a98"/><path d="M5.4 9.2Q5.9 8.4 6.9 8.4H24.4Q25.6 8.4 25.2 9.3L21.5 15.9Q21.1 16.6 20.3 16.6H1.5Q0.6 16.6 1 15.8Z" fill="#456a98"/></svg>
<div class="t" style="left:92.00px;top:509.12px;font-size:16.4px;line-height:16.4px;color:#ffffff;font-weight:400;">Ventil_2</div>
<div class="t" style="left:540.00px;top:508.94px;font-size:14.25px;line-height:14.25px;color:#ffffff;font-weight:400;">Ventil_2</div>
<svg class="i" style="left:903.00px;top:509.00px;" width="18" height="18" viewBox="0 0 18 18"><rect x="0.8" y="0.8" width="16.4" height="16.4" rx="2.300" fill="none" stroke="#dcdcdc" stroke-width="1.500"/><rect x="8.400" y="3" width="1.200" height="10.500" fill="#bdbdbd"/><path d="M7 4.500a2 2 0 0 1 4 0V5.800H7z" fill="#fff"/><circle cx="9" cy="14.500" r="1.500" fill="none" stroke="#dcdcdc" stroke-width="1"/></svg>
<div class="t" style="left:926.00px;top:511.10px;font-size:11.7px;line-height:11.7px;color:#ffffff;font-weight:400;">channel</div>
<div class="t" style="left:1600.30px;top:513.15px;font-size:14px;line-height:14px;color:#ffffff;font-weight:400;letter-spacing:-0.65px;">664</div>
<svg class="i" style="left:1631.00px;top:505.00px;" width="24" height="24" viewBox="0 0 24 24"><path fill="#8c8c8c" d="M3 17.25V21h3.75L17.81 9.94l-3.75-3.75L3 17.25zM20.71 7.04c.39-.39.39-1.02 0-1.41l-2.34-2.34c-.39-.39-1.02-.39-1.41 0l-1.83 1.83 3.75 3.75 1.83-1.83z"/></svg>
<svg class="i" style="left:1657.00px;top:505.00px;" width="24" height="24" viewBox="0 0 24 24"><path fill="#8c8c8c" d="M6 19c0 1.1.9 2 2 2h8c1.1 0 2-.9 2-2V7H6v12zM19 4h-3.5l-1-1h-5l-1 1H5v2h14V4z"/></svg>
<div class="r" style="left:0px;top:563px;width:1705px;height:1px;background:#2f2f2f;"></div>
<div class="r" style="left:533px;top:532px;width:1px;height:31px;background:#313131;"></div>
<div class="r" style="left:901px;top:532px;width:1px;height:31px;background:#313131;"></div>
<div class="r" style="left:999px;top:532px;width:1px;height:31px;background:#313131;"></div>
<div class="r" style="left:1113px;top:532px;width:1px;height:31px;background:#313131;"></div>
<div class="r" style="left:1285px;top:532px;width:1px;height:31px;background:#292929;"></div>
<div class="r" style="left:1457px;top:532px;width:1px;height:31px;background:#292929;"></div>
<div class="r" style="left:1590px;top:532px;width:1px;height:31px;background:#2f2f2f;"></div>
<svg class="i" style="left:74.30px;top:539.60px;" width="23" height="17" viewBox="0 0 23 17"><path d="M1.5 0H9.2L11.7 3.4H21.2Q22.7 3.4 22.7 4.9V15.1Q22.7 16.6 21.2 16.6H1.5Q0 16.6 0 15.1V1.5Q0 0 1.5 0Z" fill="#456a98"/></svg>
<div class="t" style="left:108.00px;top:541.12px;font-size:16.4px;line-height:16.4px;color:#ffffff;font-weight:400;">history</div>
<div class="t" style="left:540.00px;top:540.94px;font-size:14.25px;line-height:14.25px;color:#ffffff;font-weight:400;">Ventil_2 =&gt; History</div>
<svg class="i" style="left:903.00px;top:541.00px;" width="18" height="18" viewBox="0 0 18 18"><rect x="0.8" y="0.8" width="16.4" height="16.4" rx="2.300" fill="none" stroke="#dcdcdc" stroke-width="1.500"/><rect x="8.400" y="3" width="1.200" height="10.500" fill="#bdbdbd"/><path d="M7 4.500a2 2 0 0 1 4 0V5.800H7z" fill="#fff"/><circle cx="9" cy="14.500" r="1.500" fill="none" stroke="#dcdcdc" stroke-width="1"/></svg>
<div class="t" style="left:926.00px;top:543.10px;font-size:11.7px;line-height:11.7px;color:#ffffff;font-weight:400;">channel</div>
<div class="t" style="left:1600.30px;top:545.15px;font-size:14px;line-height:14px;color:#ffffff;font-weight:400;letter-spacing:-0.65px;">664</div>
<svg class="i" style="left:1631.00px;top:537.00px;" width="24" height="24" viewBox="0 0 24 24"><path fill="#8c8c8c" d="M3 17.25V21h3.75L17.81 9.94l-3.75-3.75L3 17.25zM20.71 7.04c.39-.39.39-1.02 0-1.41l-2.34-2.34c-.39-.39-1.02-.39-1.41 0l-1.83 1.83 3.75 3.75 1.83-1.83z"/></svg>
<svg class="i" style="left:1657.00px;top:537.00px;" width="24" height="24" viewBox="0 0 24 24"><path fill="#8c8c8c" d="M6 19c0 1.1.9 2 2 2h8c1.1 0 2-.9 2-2V7H6v12zM19 4h-3.5l-1-1h-5l-1 1H5v2h14V4z"/></svg>
<div class="r" style="left:0px;top:595px;width:1705px;height:1px;background:#2f2f2f;"></div>
<div class="r" style="left:533px;top:564px;width:1px;height:31px;background:#313131;"></div>
<div class="r" style="left:902px;top:564px;width:1px;height:31px;background:#313131;"></div>
<div class="r" style="left:999px;top:564px;width:1px;height:31px;background:#313131;"></div>
<div class="r" style="left:1113px;top:564px;width:1px;height:31px;background:#313131;"></div>
<div class="r" style="left:1285px;top:564px;width:1px;height:31px;background:#292929;"></div>
<div class="r" style="left:1457px;top:564px;width:1px;height:31px;background:#292929;"></div>
<div class="r" style="left:1590px;top:564px;width:1px;height:31px;background:#2f2f2f;"></div>
<svg class="i" style="left:77.00px;top:569.00px;" width="17" height="22" viewBox="0 0 17 22"><path d="M2 3Q2 2 3 2H11.8L15 5.2V19Q15 20 14 20H3Q2 20 2 19Z" fill="none" stroke="#fff" stroke-width="2.1" stroke-linejoin="round"/><path d="M10.4 2.2V6.5H14.8" fill="none" stroke="#fff" stroke-width="1.5"/><rect x="4.8" y="12" width="7.5" height="6" rx="0.8" fill="#fff"/><path d="M6.3 12.2V10.3A2.25 2.25 0 0 1 10.8 10.3V12.2" fill="none" stroke="#fff" stroke-width="1.5"/><rect x="8.1" y="13.8" width="0.9" height="2" fill="#1e1e1e"/></svg>
<div class="t" style="left:106.00px;top:573.12px;font-size:16.4px;line-height:16.4px;color:#ffffff;font-weight:400;">actualSoilMoisture</div>
<div class="t" style="left:540.00px;top:572.94px;font-size:14.25px;line-height:14.25px;color:#ffffff;font-weight:400;">Ventil_2 =&gt; Berechnete Bodenfeuchte in%</div>
<svg class="i" style="left:904.00px;top:573.00px;" width="18" height="18" viewBox="0 0 18 18"><rect x="0.8" y="0.8" width="16.400" height="16.400" rx="2.300" fill="none" stroke="#dcdcdc" stroke-width="1.500"/><circle cx="9" cy="9" r="3.400" fill="none" stroke="#dcdcdc" stroke-width="1.150"/></svg>
<div class="t" style="left:926.00px;top:574.84px;font-size:12px;line-height:12px;color:#ffffff;font-weight:400;">state</div>
<div class="t" style="left:1000.00px;top:574.84px;font-size:12px;line-height:12px;color:#ffffff;font-weight:400;">state</div>
<div class="t" style="left:1458.00px;top:572.88px;font-size:15.5px;line-height:15.5px;color:#ffffff;font-weight:400;">12,1 <span style="color:#bdbdbd">%</span></div>
<div class="t" style="left:1600.30px;top:577.15px;font-size:14px;line-height:14px;color:#ffffff;font-weight:400;letter-spacing:-0.65px;">664</div>
<svg class="i" style="left:1631.00px;top:569.00px;" width="24" height="24" viewBox="0 0 24 24"><path fill="#8c8c8c" d="M3 17.25V21h3.75L17.81 9.94l-3.75-3.75L3 17.25zM20.71 7.04c.39-.39.39-1.02 0-1.41l-2.34-2.34c-.39-.39-1.02-.39-1.41 0l-1.83 1.83 3.75 3.75 1.83-1.83z"/></svg>
<svg class="i" style="left:1657.00px;top:569.00px;" width="24" height="24" viewBox="0 0 24 24"><path fill="#8c8c8c" d="M6 19c0 1.1.9 2 2 2h8c1.1 0 2-.9 2-2V7H6v12zM19 4h-3.5l-1-1h-5l-1 1H5v2h14V4z"/></svg>
<svg class="i" style="left:1681.00px;top:569.00px;" width="24" height="24" viewBox="0 0 24 24"><path fill="#4d4d4d" d="M19.14 12.94c.04-.3.06-.61.06-.94 0-.32-.02-.64-.07-.94l2.03-1.58c.18-.14.23-.41.12-.61l-1.92-3.32c-.12-.22-.37-.29-.59-.22l-2.39.96c-.5-.38-1.03-.7-1.62-.94l-.36-2.54c-.04-.24-.24-.41-.48-.41h-3.84c-.24 0-.43.17-.47.41l-.36 2.54c-.59.24-1.13.57-1.62.94l-2.39-.96c-.22-.08-.47 0-.59.22L2.74 8.87c-.12.21-.08.47.12.61l2.03 1.58c-.05.3-.09.63-.09.94s.02.64.07.94l-2.03 1.58c-.18.14-.23.41-.12.61l1.92 3.32c.12.22.37.29.59.22l2.39-.96c.5.38 1.03.7 1.62.94l.36 2.54c.05.24.24.41.48.41h3.84c.24 0 .44-.17.47-.41l.36-2.54c.59-.24 1.13-.56 1.62-.94l2.39.96c.22.08.47 0 .59-.22l1.92-3.32c.12-.22.07-.47-.12-.61l-2.01-1.58zM12 15.6c-1.98 0-3.6-1.62-3.6-3.6s1.62-3.6 3.6-3.6 3.6 1.62 3.6 3.6-1.62 3.6-3.6 3.6z"/></svg>
<div class="r" style="left:0px;top:627px;width:1705px;height:1px;background:#2f2f2f;"></div>
<div class="r" style="left:533px;top:596px;width:1px;height:31px;background:#313131;"></div>
<div class="r" style="left:902px;top:596px;width:1px;height:31px;background:#313131;"></div>
<div class="r" style="left:999px;top:596px;width:1px;height:31px;background:#313131;"></div>
<div class="r" style="left:1113px;top:596px;width:1px;height:31px;background:#313131;"></div>
<div class="r" style="left:1285px;top:596px;width:1px;height:31px;background:#292929;"></div>
<div class="r" style="left:1457px;top:596px;width:1px;height:31px;background:#292929;"></div>
<div class="r" style="left:1590px;top:596px;width:1px;height:31px;background:#2f2f2f;"></div>
<svg class="i" style="left:77.00px;top:601.00px;" width="17" height="22" viewBox="0 0 17 22"><path d="M2 3Q2 2 3 2H11.8L15 5.2V19Q15 20 14 20H3Q2 20 2 19Z" fill="none" stroke="#fff" stroke-width="2.1" stroke-linejoin="round"/><path d="M10.4 2.2V6.5H14.8" fill="none" stroke="#fff" stroke-width="1.5"/></svg>
<div class="t" style="left:106.00px;top:605.12px;font-size:16.4px;line-height:16.4px;color:#ffffff;font-weight:400;">autoOn</div>
<div class="t" style="left:540.00px;top:604.94px;font-size:14.25px;line-height:14.25px;color:#ffffff;font-weight:400;">Ventil_2 =&gt; Switch automatic mode on / off</div>
<svg class="i" style="left:904.00px;top:605.00px;" width="18" height="18" viewBox="0 0 18 18"><rect x="0.8" y="0.8" width="16.400" height="16.400" rx="2.300" fill="none" stroke="#dcdcdc" stroke-width="1.500"/><circle cx="9" cy="9" r="3.400" fill="none" stroke="#dcdcdc" stroke-width="1.150"/></svg>
<div class="t" style="left:926.00px;top:606.84px;font-size:12px;line-height:12px;color:#ffffff;font-weight:400;">state</div>
<div class="t" style="left:1000.00px;top:606.84px;font-size:12px;line-height:12px;color:#ffffff;font-weight:400;">Switch</div>
<div class="t" style="left:1458.00px;top:604.88px;font-size:15.5px;line-height:15.5px;color:#ffffff;font-weight:400;">off<span style="color:#bdbdbd">(false)</span></div>
<div class="t" style="left:1600.30px;top:609.15px;font-size:14px;line-height:14px;color:#ffffff;font-weight:400;letter-spacing:-0.65px;">664</div>
<svg class="i" style="left:1631.00px;top:601.00px;" width="24" height="24" viewBox="0 0 24 24"><path fill="#8c8c8c" d="M3 17.25V21h3.75L17.81 9.94l-3.75-3.75L3 17.25zM20.71 7.04c.39-.39.39-1.02 0-1.41l-2.34-2.34c-.39-.39-1.02-.39-1.41 0l-1.83 1.83 3.75 3.75 1.83-1.83z"/></svg>
<svg class="i" style="left:1657.00px;top:601.00px;" width="24" height="24" viewBox="0 0 24 24"><path fill="#8c8c8c" d="M6 19c0 1.1.9 2 2 2h8c1.1 0 2-.9 2-2V7H6v12zM19 4h-3.5l-1-1h-5l-1 1H5v2h14V4z"/></svg>
<svg class="i" style="left:1681.00px;top:601.00px;" width="24" height="24" viewBox="0 0 24 24"><path fill="#4d4d4d" d="M19.14 12.94c.04-.3.06-.61.06-.94 0-.32-.02-.64-.07-.94l2.03-1.58c.18-.14.23-.41.12-.61l-1.92-3.32c-.12-.22-.37-.29-.59-.22l-2.39.96c-.5-.38-1.03-.7-1.62-.94l-.36-2.54c-.04-.24-.24-.41-.48-.41h-3.84c-.24 0-.43.17-.47.41l-.36 2.54c-.59.24-1.13.57-1.62.94l-2.39-.96c-.22-.08-.47 0-.59.22L2.74 8.87c-.12.21-.08.47.12.61l2.03 1.58c-.05.3-.09.63-.09.94s.02.64.07.94l-2.03 1.58c-.18.14-.23.41-.12.61l1.92 3.32c.12.22.37.29.59.22l2.39-.96c.5.38 1.03.7 1.62.94l.36 2.54c.05.24.24.41.48.41h3.84c.24 0 .44-.17.47-.41l.36-2.54c.59-.24 1.13-.56 1.62-.94l2.39.96c.22.08.47 0 .59-.22l1.92-3.32c.12-.22.07-.47-.12-.61l-2.01-1.58zM12 15.6c-1.98 0-3.6-1.62-3.6-3.6s1.62-3.6 3.6-3.6 3.6 1.62 3.6 3.6-1.62 3.6-3.6 3.6z"/></svg>
<div class="r" style="left:0px;top:659px;width:1705px;height:1px;background:#2f2f2f;"></div>
<div class="r" style="left:533px;top:628px;width:1px;height:31px;background:#313131;"></div>
<div class="r" style="left:902px;top:628px;width:1px;height:31px;background:#313131;"></div>
<div class="r" style="left:999px;top:628px;width:1px;height:31px;background:#313131;"></div>
<div class="r" style="left:1113px;top:628px;width:1px;height:31px;background:#313131;"></div>
<div class="r" style="left:1285px;top:628px;width:1px;height:31px;background:#292929;"></div>
<div class="r" style="left:1457px;top:628px;width:1px;height:31px;background:#292929;"></div>
<div class="r" style="left:1590px;top:628px;width:1px;height:31px;background:#2f2f2f;"></div>
<svg class="i" style="left:77.00px;top:633.00px;" width="17" height="22" viewBox="0 0 17 22"><path d="M2 3Q2 2 3 2H11.8L15 5.2V19Q15 20 14 20H3Q2 20 2 19Z" fill="none" stroke="#fff" stroke-width="2.1" stroke-linejoin="round"/><path d="M10.4 2.2V6.5H14.8" fill="none" stroke="#fff" stroke-width="1.5"/><rect x="4.8" y="12" width="7.5" height="6" rx="0.8" fill="#fff"/><path d="M6.3 12.2V10.3A2.25 2.25 0 0 1 10.8 10.3V12.2" fill="none" stroke="#fff" stroke-width="1.5"/><rect x="8.1" y="13.8" width="0.9" height="2" fill="#1e1e1e"/></svg>
<div class="t" style="left:106.00px;top:637.12px;font-size:16.4px;line-height:16.4px;color:#ffffff;font-weight:400;">countdown</div>
<div class="t" style="left:540.00px;top:636.94px;font-size:14.25px;line-height:14.25px;color:#ffffff;font-weight:400;">Ventil_2 =&gt; countdown of sprinkler</div>
<svg class="i" style="left:904.00px;top:637.00px;" width="18" height="18" viewBox="0 0 18 18"><rect x="0.8" y="0.8" width="16.400" height="16.400" rx="2.300" fill="none" stroke="#dcdcdc" stroke-width="1.500"/><circle cx="9" cy="9" r="3.400" fill="none" stroke="#dcdcdc" stroke-width="1.150"/></svg>
<div class="t" style="left:926.00px;top:638.84px;font-size:12px;line-height:12px;color:#ffffff;font-weight:400;">state</div>
<div class="t" style="left:1000.00px;top:638.84px;font-size:12px;line-height:12px;color:#ffffff;font-weight:400;">state</div>
<div class="t" style="left:1458.00px;top:636.88px;font-size:15.5px;line-height:15.5px;color:#ffffff;font-weight:400;">0</div>
<div class="t" style="left:1600.30px;top:641.15px;font-size:14px;line-height:14px;color:#ffffff;font-weight:400;letter-spacing:-0.65px;">664</div>
<svg class="i" style="left:1631.00px;top:633.00px;" width="24" height="24" viewBox="0 0 24 24"><path fill="#8c8c8c" d="M3 17.25V21h3.75L17.81 9.94l-3.75-3.75L3 17.25zM20.71 7.04c.39-.39.39-1.02 0-1.41l-2.34-2.34c-.39-.39-1.02-.39-1.41 0l-1.83 1.83 3.75 3.75 1.83-1.83z"/></svg>
<svg class="i" style="left:1657.00px;top:633.00px;" width="24" height="24" viewBox="0 0 24 24"><path fill="#8c8c8c" d="M6 19c0 1.1.9 2 2 2h8c1.1 0 2-.9 2-2V7H6v12zM19 4h-3.5l-1-1h-5l-1 1H5v2h14V4z"/></svg>
<svg class="i" style="left:1681.00px;top:633.00px;" width="24" height="24" viewBox="0 0 24 24"><path fill="#4d4d4d" d="M19.14 12.94c.04-.3.06-.61.06-.94 0-.32-.02-.64-.07-.94l2.03-1.58c.18-.14.23-.41.12-.61l-1.92-3.32c-.12-.22-.37-.29-.59-.22l-2.39.96c-.5-.38-1.03-.7-1.62-.94l-.36-2.54c-.04-.24-.24-.41-.48-.41h-3.84c-.24 0-.43.17-.47.41l-.36 2.54c-.59.24-1.13.57-1.62.94l-2.39-.96c-.22-.08-.47 0-.59.22L2.74 8.87c-.12.21-.08.47.12.61l2.03 1.58c-.05.3-.09.63-.09.94s.02.64.07.94l-2.03 1.58c-.18.14-.23.41-.12.61l1.92 3.32c.12.22.37.29.59.22l2.39-.96c.5.38 1.03.7 1.62.94l.36 2.54c.05.24.24.41.48.41h3.84c.24 0 .44-.17.47-.41l.36-2.54c.59-.24 1.13-.56 1.62-.94l2.39.96c.22.08.47 0 .59-.22l1.92-3.32c.12-.22.07-.47-.12-.61l-2.01-1.58zM12 15.6c-1.98 0-3.6-1.62-3.6-3.6s1.62-3.6 3.6-3.6 3.6 1.62 3.6 3.6-1.62 3.6-3.6 3.6z"/></svg>
<div class="r" style="left:0px;top:691px;width:1705px;height:1px;background:#2f2f2f;"></div>
<div class="r" style="left:533px;top:660px;width:1px;height:31px;background:#313131;"></div>
<div class="r" style="left:902px;top:660px;width:1px;height:31px;background:#313131;"></div>
<div class="r" style="left:999px;top:660px;width:1px;height:31px;background:#313131;"></div>
<div class="r" style="left:1113px;top:660px;width:1px;height:31px;background:#313131;"></div>
<div class="r" style="left:1285px;top:660px;width:1px;height:31px;background:#292929;"></div>
<div class="r" style="left:1457px;top:660px;width:1px;height:31px;background:#292929;"></div>
<div class="r" style="left:1590px;top:660px;width:1px;height:31px;background:#2f2f2f;"></div>
<svg class="i" style="left:77.00px;top:665.00px;" width="17" height="22" viewBox="0 0 17 22"><path d="M2 3Q2 2 3 2H11.8L15 5.2V19Q15 20 14 20H3Q2 20 2 19Z" fill="none" stroke="#fff" stroke-width="2.1" stroke-linejoin="round"/><path d="M10.4 2.2V6.5H14.8" fill="none" stroke="#fff" stroke-width="1.5"/></svg>
<div class="t" style="left:106.00px;top:669.12px;font-size:16.4px;line-height:16.4px;color:#ffffff;font-weight:400;">runningTime</div>
<div class="t" style="left:540.00px;top:668.94px;font-size:14.25px;line-height:14.25px;color:#ffffff;font-weight:400;">Ventil_2 =&gt; running time of sprinkler</div>
<svg class="i" style="left:904.00px;top:669.00px;" width="18" height="18" viewBox="0 0 18 18"><rect x="0.8" y="0.8" width="16.400" height="16.400" rx="2.300" fill="none" stroke="#dcdcdc" stroke-width="1.500"/><circle cx="9" cy="9" r="3.400" fill="none" stroke="#dcdcdc" stroke-width="1.150"/></svg>
<div class="t" style="left:926.00px;top:670.84px;font-size:12px;line-height:12px;color:#ffffff;font-weight:400;">state</div>
<div class="t" style="left:1000.00px;top:670.84px;font-size:12px;line-height:12px;color:#ffffff;font-weight:400;">state</div>
<div class="t" style="left:1458.00px;top:668.88px;font-size:15.5px;line-height:15.5px;color:#ffffff;font-weight:400;">0</div>
<div class="t" style="left:1600.30px;top:673.15px;font-size:14px;line-height:14px;color:#ffffff;font-weight:400;letter-spacing:-0.65px;">664</div>
<svg class="i" style="left:1631.00px;top:665.00px;" width="24" height="24" viewBox="0 0 24 24"><path fill="#8c8c8c" d="M3 17.25V21h3.75L17.81 9.94l-3.75-3.75L3 17.25zM20.71 7.04c.39-.39.39-1.02 0-1.41l-2.34-2.34c-.39-.39-1.02-.39-1.41 0l-1.83 1.83 3.75 3.75 1.83-1.83z"/></svg>
<svg class="i" style="left:1657.00px;top:665.00px;" width="24" height="24" viewBox="0 0 24 24"><path fill="#8c8c8c" d="M6 19c0 1.1.9 2 2 2h8c1.1 0 2-.9 2-2V7H6v12zM19 4h-3.5l-1-1h-5l-1 1H5v2h14V4z"/></svg>
<svg class="i" style="left:1681.00px;top:665.00px;" width="24" height="24" viewBox="0 0 24 24"><path fill="#4d4d4d" d="M19.14 12.94c.04-.3.06-.61.06-.94 0-.32-.02-.64-.07-.94l2.03-1.58c.18-.14.23-.41.12-.61l-1.92-3.32c-.12-.22-.37-.29-.59-.22l-2.39.96c-.5-.38-1.03-.7-1.62-.94l-.36-2.54c-.04-.24-.24-.41-.48-.41h-3.84c-.24 0-.43.17-.47.41l-.36 2.54c-.59.24-1.13.57-1.62.94l-2.39-.96c-.22-.08-.47 0-.59.22L2.74 8.87c-.12.21-.08.47.12.61l2.03 1.58c-.05.3-.09.63-.09.94s.02.64.07.94l-2.03 1.58c-.18.14-.23.41-.12.61l1.92 3.32c.12.22.37.29.59.22l2.39-.96c.5.38 1.03.7 1.62.94l.36 2.54c.05.24.24.41.48.41h3.84c.24 0 .44-.17.47-.41l.36-2.54c.59-.24 1.13-.56 1.62-.94l2.39.96c.22.08.47 0 .59-.22l1.92-3.32c.12-.22.07-.47-.12-.61l-2.01-1.58zM12 15.6c-1.98 0-3.6-1.62-3.6-3.6s1.62-3.6 3.6-3.6 3.6 1.62 3.6 3.6-1.62 3.6-3.6 3.6z"/></svg>
<div class="r" style="left:0px;top:723px;width:1705px;height:1px;background:#2f2f2f;"></div>
<div class="r" style="left:533px;top:692px;width:1px;height:31px;background:#313131;"></div>
<div class="r" style="left:902px;top:692px;width:1px;height:31px;background:#313131;"></div>
<div class="r" style="left:999px;top:692px;width:1px;height:31px;background:#313131;"></div>
<div class="r" style="left:1113px;top:692px;width:1px;height:31px;background:#313131;"></div>
<div class="r" style="left:1285px;top:692px;width:1px;height:31px;background:#292929;"></div>
<div class="r" style="left:1457px;top:692px;width:1px;height:31px;background:#292929;"></div>
<div class="r" style="left:1590px;top:692px;width:1px;height:31px;background:#2f2f2f;"></div>
<svg class="i" style="left:77.00px;top:697.00px;" width="17" height="22" viewBox="0 0 17 22"><path d="M2 3Q2 2 3 2H11.8L15 5.2V19Q15 20 14 20H3Q2 20 2 19Z" fill="none" stroke="#fff" stroke-width="2.1" stroke-linejoin="round"/><path d="M10.4 2.2V6.5H14.8" fill="none" stroke="#fff" stroke-width="1.5"/><rect x="4.8" y="12" width="7.5" height="6" rx="0.8" fill="#fff"/><path d="M6.3 12.2V10.3A2.25 2.25 0 0 1 10.8 10.3V12.2" fill="none" stroke="#fff" stroke-width="1.5"/><rect x="8.1" y="13.8" width="0.9" height="2" fill="#1e1e1e"/></svg>
<div class="t" style="left:106.00px;top:701.12px;font-size:16.4px;line-height:16.4px;color:#ffffff;font-weight:400;">sprinklerState</div>
<div class="t" style="left:540.00px;top:700.94px;font-size:14.25px;line-height:14.25px;color:#ffffff;font-weight:400;">Ventil_2 =&gt; actual state of sprinkler</div>
<svg class="i" style="left:904.00px;top:701.00px;" width="18" height="18" viewBox="0 0 18 18"><rect x="0.8" y="0.8" width="16.400" height="16.400" rx="2.300" fill="none" stroke="#dcdcdc" stroke-width="1.500"/><circle cx="9" cy="9" r="3.400" fill="none" stroke="#dcdcdc" stroke-width="1.150"/></svg>
<div class="t" style="left:926.00px;top:702.84px;font-size:12px;line-height:12px;color:#ffffff;font-weight:400;">state</div>
<div class="t" style="left:1000.00px;top:702.84px;font-size:12px;line-height:12px;color:#ffffff;font-weight:400;">state</div>
<div class="t" style="left:1458.00px;top:700.88px;font-size:15.5px;line-height:15.5px;color:#ffffff;font-weight:400;">off<span style="color:#bdbdbd">(0)</span></div>
<div class="t" style="left:1600.30px;top:705.15px;font-size:14px;line-height:14px;color:#ffffff;font-weight:400;letter-spacing:-0.65px;">664</div>
<svg class="i" style="left:1631.00px;top:697.00px;" width="24" height="24" viewBox="0 0 24 24"><path fill="#8c8c8c" d="M3 17.25V21h3.75L17.81 9.94l-3.75-3.75L3 17.25zM20.71 7.04c.39-.39.39-1.02 0-1.41l-2.34-2.34c-.39-.39-1.02-.39-1.41 0l-1.83 1.83 3.75 3.75 1.83-1.83z"/></svg>
<svg class="i" style="left:1657.00px;top:697.00px;" width="24" height="24" viewBox="0 0 24 24"><path fill="#8c8c8c" d="M6 19c0 1.1.9 2 2 2h8c1.1 0 2-.9 2-2V7H6v12zM19 4h-3.5l-1-1h-5l-1 1H5v2h14V4z"/></svg>
<svg class="i" style="left:1681.00px;top:697.00px;" width="24" height="24" viewBox="0 0 24 24"><path fill="#4d4d4d" d="M19.14 12.94c.04-.3.06-.61.06-.94 0-.32-.02-.64-.07-.94l2.03-1.58c.18-.14.23-.41.12-.61l-1.92-3.32c-.12-.22-.37-.29-.59-.22l-2.39.96c-.5-.38-1.03-.7-1.62-.94l-.36-2.54c-.04-.24-.24-.41-.48-.41h-3.84c-.24 0-.43.17-.47.41l-.36 2.54c-.59.24-1.13.57-1.62.94l-2.39-.96c-.22-.08-.47 0-.59.22L2.74 8.87c-.12.21-.08.47.12.61l2.03 1.58c-.05.3-.09.63-.09.94s.02.64.07.94l-2.03 1.58c-.18.14-.23.41-.12.61l1.92 3.32c.12.22.37.29.59.22l2.39-.96c.5.38 1.03.7 1.62.94l.36 2.54c.05.24.24.41.48.41h3.84c.24 0 .44-.17.47-.41l.36-2.54c.59-.24 1.13-.56 1.62-.94l2.39.96c.22.08.47 0 .59-.22l1.92-3.32c.12-.22.07-.47-.12-.61l-2.01-1.58zM12 15.6c-1.98 0-3.6-1.62-3.6-3.6s1.62-3.6 3.6-3.6 3.6 1.62 3.6 3.6-1.62 3.6-3.6 3.6z"/></svg>
<div class="r" style="left:0px;top:755px;width:1705px;height:1px;background:#2f2f2f;"></div>
<div class="r" style="left:533px;top:724px;width:1px;height:31px;background:#313131;"></div>
<div class="r" style="left:902px;top:724px;width:1px;height:31px;background:#313131;"></div>
<div class="r" style="left:999px;top:724px;width:1px;height:31px;background:#313131;"></div>
<div class="r" style="left:1113px;top:724px;width:1px;height:31px;background:#313131;"></div>
<div class="r" style="left:1285px;top:724px;width:1px;height:31px;background:#292929;"></div>
<div class="r" style="left:1457px;top:724px;width:1px;height:31px;background:#292929;"></div>
<div class="r" style="left:1590px;top:724px;width:1px;height:31px;background:#2f2f2f;"></div>
<svg class="i" style="left:77.00px;top:729.00px;" width="17" height="22" viewBox="0 0 17 22"><path d="M2 3Q2 2 3 2H11.8L15 5.2V19Q15 20 14 20H3Q2 20 2 19Z" fill="none" stroke="#fff" stroke-width="2.1" stroke-linejoin="round"/><path d="M10.4 2.2V6.5H14.8" fill="none" stroke="#fff" stroke-width="1.5"/><rect x="4.8" y="12" width="7.5" height="6" rx="0.8" fill="#fff"/><path d="M6.3 12.2V10.3A2.25 2.25 0 0 1 10.8 10.3V12.2" fill="none" stroke="#fff" stroke-width="1.5"/><rect x="8.1" y="13.8" width="0.9" height="2" fill="#1e1e1e"/></svg>
<div class="t" style="left:106.00px;top:733.12px;font-size:16.4px;line-height:16.4px;color:#ffffff;font-weight:400;">triggerPoint</div>
<div class="t" style="left:540.00px;top:732.94px;font-size:14.25px;line-height:14.25px;color:#ffffff;font-weight:400;">Ventil_2 =&gt; Trigger point of sprinkler</div>
<svg class="i" style="left:904.00px;top:733.00px;" width="18" height="18" viewBox="0 0 18 18"><rect x="0.8" y="0.8" width="16.400" height="16.400" rx="2.300" fill="none" stroke="#dcdcdc" stroke-width="1.500"/><circle cx="9" cy="9" r="3.400" fill="none" stroke="#dcdcdc" stroke-width="1.150"/></svg>
<div class="t" style="left:926.00px;top:734.84px;font-size:12px;line-height:12px;color:#ffffff;font-weight:400;">state</div>
<div class="t" style="left:1000.00px;top:734.84px;font-size:12px;line-height:12px;color:#ffffff;font-weight:400;">state</div>
<div class="t" style="left:1458.00px;top:732.88px;font-size:15.5px;line-height:15.5px;color:#ffffff;font-weight:400;">50</div>
<div class="t" style="left:1600.30px;top:737.15px;font-size:14px;line-height:14px;color:#ffffff;font-weight:400;letter-spacing:-0.65px;">664</div>
<svg class="i" style="left:1631.00px;top:729.00px;" width="24" height="24" viewBox="0 0 24 24"><path fill="#8c8c8c" d="M3 17.25V21h3.75L17.81 9.94l-3.75-3.75L3 17.25zM20.71 7.04c.39-.39.39-1.02 0-1.41l-2.34-2.34c-.39-.39-1.02-.39-1.41 0l-1.83 1.83 3.75 3.75 1.83-1.83z"/></svg>
<svg class="i" style="left:1657.00px;top:729.00px;" width="24" height="24" viewBox="0 0 24 24"><path fill="#8c8c8c" d="M6 19c0 1.1.9 2 2 2h8c1.1 0 2-.9 2-2V7H6v12zM19 4h-3.5l-1-1h-5l-1 1H5v2h14V4z"/></svg>
<svg class="i" style="left:1681.00px;top:729.00px;" width="24" height="24" viewBox="0 0 24 24"><path fill="#4d4d4d" d="M19.14 12.94c.04-.3.06-.61.06-.94 0-.32-.02-.64-.07-.94l2.03-1.58c.18-.14.23-.41.12-.61l-1.92-3.32c-.12-.22-.37-.29-.59-.22l-2.39.96c-.5-.38-1.03-.7-1.62-.94l-.36-2.54c-.04-.24-.24-.41-.48-.41h-3.84c-.24 0-.43.17-.47.41l-.36 2.54c-.59.24-1.13.57-1.62.94l-2.39-.96c-.22-.08-.47 0-.59.22L2.74 8.87c-.12.21-.08.47.12.61l2.03 1.58c-.05.3-.09.63-.09.94s.02.64.07.94l-2.03 1.58c-.18.14-.23.41-.12.61l1.92 3.32c.12.22.37.29.59.22l2.39-.96c.5.38 1.03.7 1.62.94l.36 2.54c.05.24.24.41.48.41h3.84c.24 0 .44-.17.47-.41l.36-2.54c.59-.24 1.13-.56 1.62-.94l2.39.96c.22.08.47 0 .59-.22l1.92-3.32c.12-.22.07-.47-.12-.61l-2.01-1.58zM12 15.6c-1.98 0-3.6-1.62-3.6-3.6s1.62-3.6 3.6-3.6 3.6 1.62 3.6 3.6-1.62 3.6-3.6 3.6z"/></svg>
<div class="r" style="left:0px;top:787px;width:1705px;height:1px;background:#2f2f2f;"></div>
<div class="r" style="left:533px;top:756px;width:1px;height:31px;background:#313131;"></div>
<div class="r" style="left:901px;top:756px;width:1px;height:31px;background:#313131;"></div>
<div class="r" style="left:999px;top:756px;width:1px;height:31px;background:#313131;"></div>
<div class="r" style="left:1113px;top:756px;width:1px;height:31px;background:#313131;"></div>
<div class="r" style="left:1285px;top:756px;width:1px;height:31px;background:#292929;"></div>
<div class="r" style="left:1457px;top:756px;width:1px;height:31px;background:#292929;"></div>
<div class="r" style="left:1590px;top:756px;width:1px;height:31px;background:#2f2f2f;"></div>
<svg class="i" style="left:58.30px;top:763.60px;" width="23" height="17" viewBox="0 0 23 17"><path d="M1.5 0H9.2L11.7 3.4H21.2Q22.7 3.4 22.7 4.9V15.1Q22.7 16.6 21.2 16.6H1.5Q0 16.6 0 15.1V1.5Q0 0 1.5 0Z" fill="#456a98"/></svg>
<div class="t" style="left:92.00px;top:765.12px;font-size:16.4px;line-height:16.4px;color:#ffffff;font-weight:400;">Ventil_3</div>
<div class="t" style="left:540.00px;top:764.94px;font-size:14.25px;line-height:14.25px;color:#ffffff;font-weight:400;">Ventil_3</div>
<svg class="i" style="left:903.00px;top:765.00px;" width="18" height="18" viewBox="0 0 18 18"><rect x="0.8" y="0.8" width="16.4" height="16.4" rx="2.300" fill="none" stroke="#dcdcdc" stroke-width="1.500"/><rect x="8.400" y="3" width="1.200" height="10.500" fill="#bdbdbd"/><path d="M7 4.500a2 2 0 0 1 4 0V5.800H7z" fill="#fff"/><circle cx="9" cy="14.500" r="1.500" fill="none" stroke="#dcdcdc" stroke-width="1"/></svg>
<div class="t" style="left:926.00px;top:767.10px;font-size:11.7px;line-height:11.7px;color:#ffffff;font-weight:400;">channel</div>
<div class="t" style="left:1600.30px;top:769.15px;font-size:14px;line-height:14px;color:#ffffff;font-weight:400;letter-spacing:-0.65px;">664</div>
<svg class="i" style="left:1631.00px;top:761.00px;" width="24" height="24" viewBox="0 0 24 24"><path fill="#8c8c8c" d="M3 17.25V21h3.75L17.81 9.94l-3.75-3.75L3 17.25zM20.71 7.04c.39-.39.39-1.02 0-1.41l-2.34-2.34c-.39-.39-1.02-.39-1.41 0l-1.83 1.83 3.75 3.75 1.83-1.83z"/></svg>
<svg class="i" style="left:1657.00px;top:761.00px;" width="24" height="24" viewBox="0 0 24 24"><path fill="#8c8c8c" d="M6 19c0 1.1.9 2 2 2h8c1.1 0 2-.9 2-2V7H6v12zM19 4h-3.5l-1-1h-5l-1 1H5v2h14V4z"/></svg>
<div class="r" style="left:0px;top:819px;width:1705px;height:1px;background:#2f2f2f;"></div>
<div class="r" style="left:533px;top:788px;width:1px;height:31px;background:#313131;"></div>
<div class="r" style="left:901px;top:788px;width:1px;height:31px;background:#313131;"></div>
<div class="r" style="left:999px;top:788px;width:1px;height:31px;background:#313131;"></div>
<div class="r" style="left:1113px;top:788px;width:1px;height:31px;background:#313131;"></div>
<div class="r" style="left:1285px;top:788px;width:1px;height:31px;background:#292929;"></div>
<div class="r" style="left:1457px;top:788px;width:1px;height:31px;background:#292929;"></div>
<div class="r" style="left:1590px;top:788px;width:1px;height:31px;background:#2f2f2f;"></div>
<svg class="i" style="left:58.30px;top:795.60px;" width="23" height="17" viewBox="0 0 23 17"><path d="M1.5 0H9.2L11.7 3.4H21.2Q22.7 3.4 22.7 4.9V15.1Q22.7 16.6 21.2 16.6H1.5Q0 16.6 0 15.1V1.5Q0 0 1.5 0Z" fill="#456a98"/></svg>
<div class="t" style="left:92.00px;top:797.12px;font-size:16.4px;line-height:16.4px;color:#ffffff;font-weight:400;">Ventil_4</div>
<div class="t" style="left:540.00px;top:796.94px;font-size:14.25px;line-height:14.25px;color:#ffffff;font-weight:400;">Ventil_4</div>
<svg class="i" style="left:903.00px;top:797.00px;" width="18" height="18" viewBox="0 0 18 18"><rect x="0.8" y="0.8" width="16.4" height="16.4" rx="2.300" fill="none" stroke="#dcdcdc" stroke-width="1.500"/><rect x="8.400" y="3" width="1.200" height="10.500" fill="#bdbdbd"/><path d="M7 4.500a2 2 0 0 1 4 0V5.800H7z" fill="#fff"/><circle cx="9" cy="14.500" r="1.500" fill="none" stroke="#dcdcdc" stroke-width="1"/></svg>
<div class="t" style="left:926.00px;top:799.10px;font-size:11.7px;line-height:11.7px;color:#ffffff;font-weight:400;">channel</div>
<div class="t" style="left:1600.30px;top:801.15px;font-size:14px;line-height:14px;color:#ffffff;font-weight:400;letter-spacing:-0.65px;">664</div>
<svg class="i" style="left:1631.00px;top:793.00px;" width="24" height="24" viewBox="0 0 24 24"><path fill="#8c8c8c" d="M3 17.25V21h3.75L17.81 9.94l-3.75-3.75L3 17.25zM20.71 7.04c.39-.39.39-1.02 0-1.41l-2.34-2.34c-.39-.39-1.02-.39-1.41 0l-1.83 1.83 3.75 3.75 1.83-1.83z"/></svg>
<svg class="i" style="left:1657.00px;top:793.00px;" width="24" height="24" viewBox="0 0 24 24"><path fill="#8c8c8c" d="M6 19c0 1.1.9 2 2 2h8c1.1 0 2-.9 2-2V7H6v12zM19 4h-3.5l-1-1h-5l-1 1H5v2h14V4z"/></svg>
<div class="r" style="left:0px;top:851px;width:1705px;height:1px;background:#2f2f2f;"></div>
<div class="r" style="left:533px;top:820px;width:1px;height:31px;background:#313131;"></div>
<div class="r" style="left:901px;top:820px;width:1px;height:31px;background:#313131;"></div>
<div class="r" style="left:999px;top:820px;width:1px;height:31px;background:#313131;"></div>
<div class="r" style="left:1113px;top:820px;width:1px;height:31px;background:#313131;"></div>
<div class="r" style="left:1285px;top:820px;width:1px;height:31px;background:#292929;"></div>
<div class="r" style="left:1457px;top:820px;width:1px;height:31px;background:#292929;"></div>
<div class="r" style="left:1590px;top:820px;width:1px;height:31px;background:#2f2f2f;"></div>
<svg class="i" style="left:58.30px;top:827.60px;" width="23" height="17" viewBox="0 0 23 17"><path d="M1.5 0H9.2L11.7 3.4H21.2Q22.7 3.4 22.7 4.9V15.1Q22.7 16.6 21.2 16.6H1.5Q0 16.6 0 15.1V1.5Q0 0 1.5 0Z" fill="#456a98"/></svg>
<div class="t" style="left:92.00px;top:829.12px;font-size:16.4px;line-height:16.4px;color:#ffffff;font-weight:400;">Ventil_5</div>
<div class="t" style="left:540.00px;top:828.94px;font-size:14.25px;line-height:14.25px;color:#ffffff;font-weight:400;">Ventil_5</div>
<svg class="i" style="left:903.00px;top:829.00px;" width="18" height="18" viewBox="0 0 18 18"><rect x="0.8" y="0.8" width="16.4" height="16.4" rx="2.300" fill="none" stroke="#dcdcdc" stroke-width="1.500"/><rect x="8.400" y="3" width="1.200" height="10.500" fill="#bdbdbd"/><path d="M7 4.500a2 2 0 0 1 4 0V5.800H7z" fill="#fff"/><circle cx="9" cy="14.500" r="1.500" fill="none" stroke="#dcdcdc" stroke-width="1"/></svg>
<div class="t" style="left:926.00px;top:831.10px;font-size:11.7px;line-height:11.7px;color:#ffffff;font-weight:400;">channel</div>
<div class="t" style="left:1600.30px;top:833.15px;font-size:14px;line-height:14px;color:#ffffff;font-weight:400;letter-spacing:-0.65px;">664</div>
<svg class="i" style="left:1631.00px;top:825.00px;" width="24" height="24" viewBox="0 0 24 24"><path fill="#8c8c8c" d="M3 17.25V21h3.75L17.81 9.94l-3.75-3.75L3 17.25zM20.71 7.04c.39-.39.39-1.02 0-1.41l-2.34-2.34c-.39-.39-1.02-.39-1.41 0l-1.83 1.83 3.75 3.75 1.83-1.83z"/></svg>
<svg class="i" style="left:1657.00px;top:825.00px;" width="24" height="24" viewBox="0 0 24 24"><path fill="#8c8c8c" d="M6 19c0 1.1.9 2 2 2h8c1.1 0 2-.9 2-2V7H6v12zM19 4h-3.5l-1-1h-5l-1 1H5v2h14V4z"/></svg>
<div class="r" style="left:0px;top:883px;width:1705px;height:1px;background:#2f2f2f;"></div>
<div class="r" style="left:533px;top:852px;width:1px;height:31px;background:#313131;"></div>
<div class="r" style="left:901px;top:852px;width:1px;height:31px;background:#313131;"></div>
<div class="r" style="left:999px;top:852px;width:1px;height:31px;background:#313131;"></div>
<div class="r" style="left:1113px;top:852px;width:1px;height:31px;background:#313131;"></div>
<div class="r" style="left:1285px;top:852px;width:1px;height:31px;background:#292929;"></div>
<div class="r" style="left:1457px;top:852px;width:1px;height:31px;background:#292929;"></div>
<div class="r" style="left:1590px;top:852px;width:1px;height:31px;background:#2f2f2f;"></div>
<svg class="i" style="left:58.30px;top:859.60px;" width="23" height="17" viewBox="0 0 23 17"><path d="M1.5 0H9.2L11.7 3.4H21.2Q22.7 3.4 22.7 4.9V15.1Q22.7 16.6 21.2 16.6H1.5Q0 16.6 0 15.1V1.5Q0 0 1.5 0Z" fill="#456a98"/></svg>
<div class="t" style="left:92.00px;top:861.12px;font-size:16.4px;line-height:16.4px;color:#ffffff;font-weight:400;">Ventil_6</div>
<div class="t" style="left:540.00px;top:860.94px;font-size:14.25px;line-height:14.25px;color:#ffffff;font-weight:400;">Ventil_6</div>
<svg class="i" style="left:903.00px;top:861.00px;" width="18" height="18" viewBox="0 0 18 18"><rect x="0.8" y="0.8" width="16.4" height="16.4" rx="2.300" fill="none" stroke="#dcdcdc" stroke-width="1.500"/><rect x="8.400" y="3" width="1.200" height="10.500" fill="#bdbdbd"/><path d="M7 4.500a2 2 0 0 1 4 0V5.800H7z" fill="#fff"/><circle cx="9" cy="14.500" r="1.500" fill="none" stroke="#dcdcdc" stroke-width="1"/></svg>
<div class="t" style="left:926.00px;top:863.10px;font-size:11.7px;line-height:11.7px;color:#ffffff;font-weight:400;">channel</div>
<div class="t" style="left:1600.30px;top:865.15px;font-size:14px;line-height:14px;color:#ffffff;font-weight:400;letter-spacing:-0.65px;">664</div>
<svg class="i" style="left:1631.00px;top:857.00px;" width="24" height="24" viewBox="0 0 24 24"><path fill="#8c8c8c" d="M3 17.25V21h3.75L17.81 9.94l-3.75-3.75L3 17.25zM20.71 7.04c.39-.39.39-1.02 0-1.41l-2.34-2.34c-.39-.39-1.02-.39-1.41 0l-1.83 1.83 3.75 3.75 1.83-1.83z"/></svg>
<svg class="i" style="left:1657.00px;top:857.00px;" width="24" height="24" viewBox="0 0 24 24"><path fill="#8c8c8c" d="M6 19c0 1.1.9 2 2 2h8c1.1 0 2-.9 2-2V7H6v12zM19 4h-3.5l-1-1h-5l-1 1H5v2h14V4z"/></svg>
<div class="r" style="left:0px;top:915px;width:1705px;height:1px;background:#2f2f2f;"></div>
<div class="r" style="left:533px;top:884px;width:1px;height:31px;background:#313131;"></div>
<div class="r" style="left:901px;top:884px;width:1px;height:31px;background:#313131;"></div>
<div class="r" style="left:999px;top:884px;width:1px;height:31px;background:#313131;"></div>
<div class="r" style="left:1113px;top:884px;width:1px;height:31px;background:#313131;"></div>
<div class="r" style="left:1285px;top:884px;width:1px;height:31px;background:#292929;"></div>
<div class="r" style="left:1457px;top:884px;width:1px;height:31px;background:#292929;"></div>
<div class="r" style="left:1590px;top:884px;width:1px;height:31px;background:#2f2f2f;"></div>
<svg class="i" style="left:26.30px;top:891.60px;" width="23" height="17" viewBox="0 0 23 17"><path d="M1.5 0H9.2L11.7 3.4H21.2Q22.7 3.4 22.7 4.9V15.1Q22.7 16.6 21.2 16.6H1.5Q0 16.6 0 15.1V1.5Q0 0 1.5 0Z" fill="#456a98"/></svg>
<div class="t" style="left:60.00px;top:893.12px;font-size:16.4px;line-height:16.4px;color:#ffffff;font-weight:400;">admin</div>
<svg class="i" style="left:504.80px;top:886.70px;" width="28" height="28" viewBox="0 0 24 24"><path fill="#ffffff" d="M14 2H6c-1.1 0-1.99.9-1.99 2L4 20c0 1.1.89 2 1.99 2H18c1.1 0 2-.9 2-2V8l-6-6zm2 16H8v-2h8v2zm0-4H8v-2h8v2zm-3-5V3.5L18.5 9H13z"/></svg>
<div class="t" style="left:540.00px;top:892.94px;font-size:14.25px;line-height:14.25px;color:#ffffff;font-weight:400;">admin</div>
<svg class="i" style="left:901.80px;top:890.00px;" width="24" height="24" viewBox="0 0 24 24"><path fill="#ffffff" d="M14 2H6c-1.1 0-1.99.9-1.99 2L4 20c0 1.1.89 2 1.99 2H18c1.1 0 2-.9 2-2V8l-6-6zm2 16H8v-2h8v2zm0-4H8v-2h8v2zm-3-5V3.5L18.5 9H13z"/></svg>
<div class="t" style="left:929.00px;top:894.84px;font-size:12px;line-height:12px;color:#ffffff;font-weight:400;">meta</div>
<div class="t" style="left:1600.30px;top:897.15px;font-size:14px;line-height:14px;color:#ffffff;font-weight:400;letter-spacing:-0.65px;">664</div>
<svg class="i" style="left:1631.00px;top:889.00px;" width="24" height="24" viewBox="0 0 24 24"><path fill="#8c8c8c" d="M3 17.25V21h3.75L17.81 9.94l-3.75-3.75L3 17.25zM20.71 7.04c.39-.39.39-1.02 0-1.41l-2.34-2.34c-.39-.39-1.02-.39-1.41 0l-1.83 1.83 3.75 3.75 1.83-1.83z"/></svg>
<svg class="i" style="left:1657.00px;top:889.00px;" width="24" height="24" viewBox="0 0 24 24"><path fill="#8c8c8c" d="M6 19c0 1.1.9 2 2 2h8c1.1 0 2-.9 2-2V7H6v12zM19 4h-3.5l-1-1h-5l-1 1H5v2h14V4z"/></svg>
</div>
<div class="r" style="left:1894px;top:158px;width:10px;height:914px;background:#cdcdcd;"></div>
<svg class="i" style="left:1895px;top:160px;" width="8" height="6" viewBox="0 0 8 6"><path d="M1 5h6L4 1.5z" fill="#555"/></svg>
<svg class="i" style="left:1895px;top:1062px;" width="8" height="6" viewBox="0 0 8 6"><path d="M1 1h6L4 4.5z" fill="#555"/></svg>
<div class="r" style="left:1896px;top:742px;width:6px;height:134px;background:#5b5b5b;border-radius:3px;"></div>
</body></html>
